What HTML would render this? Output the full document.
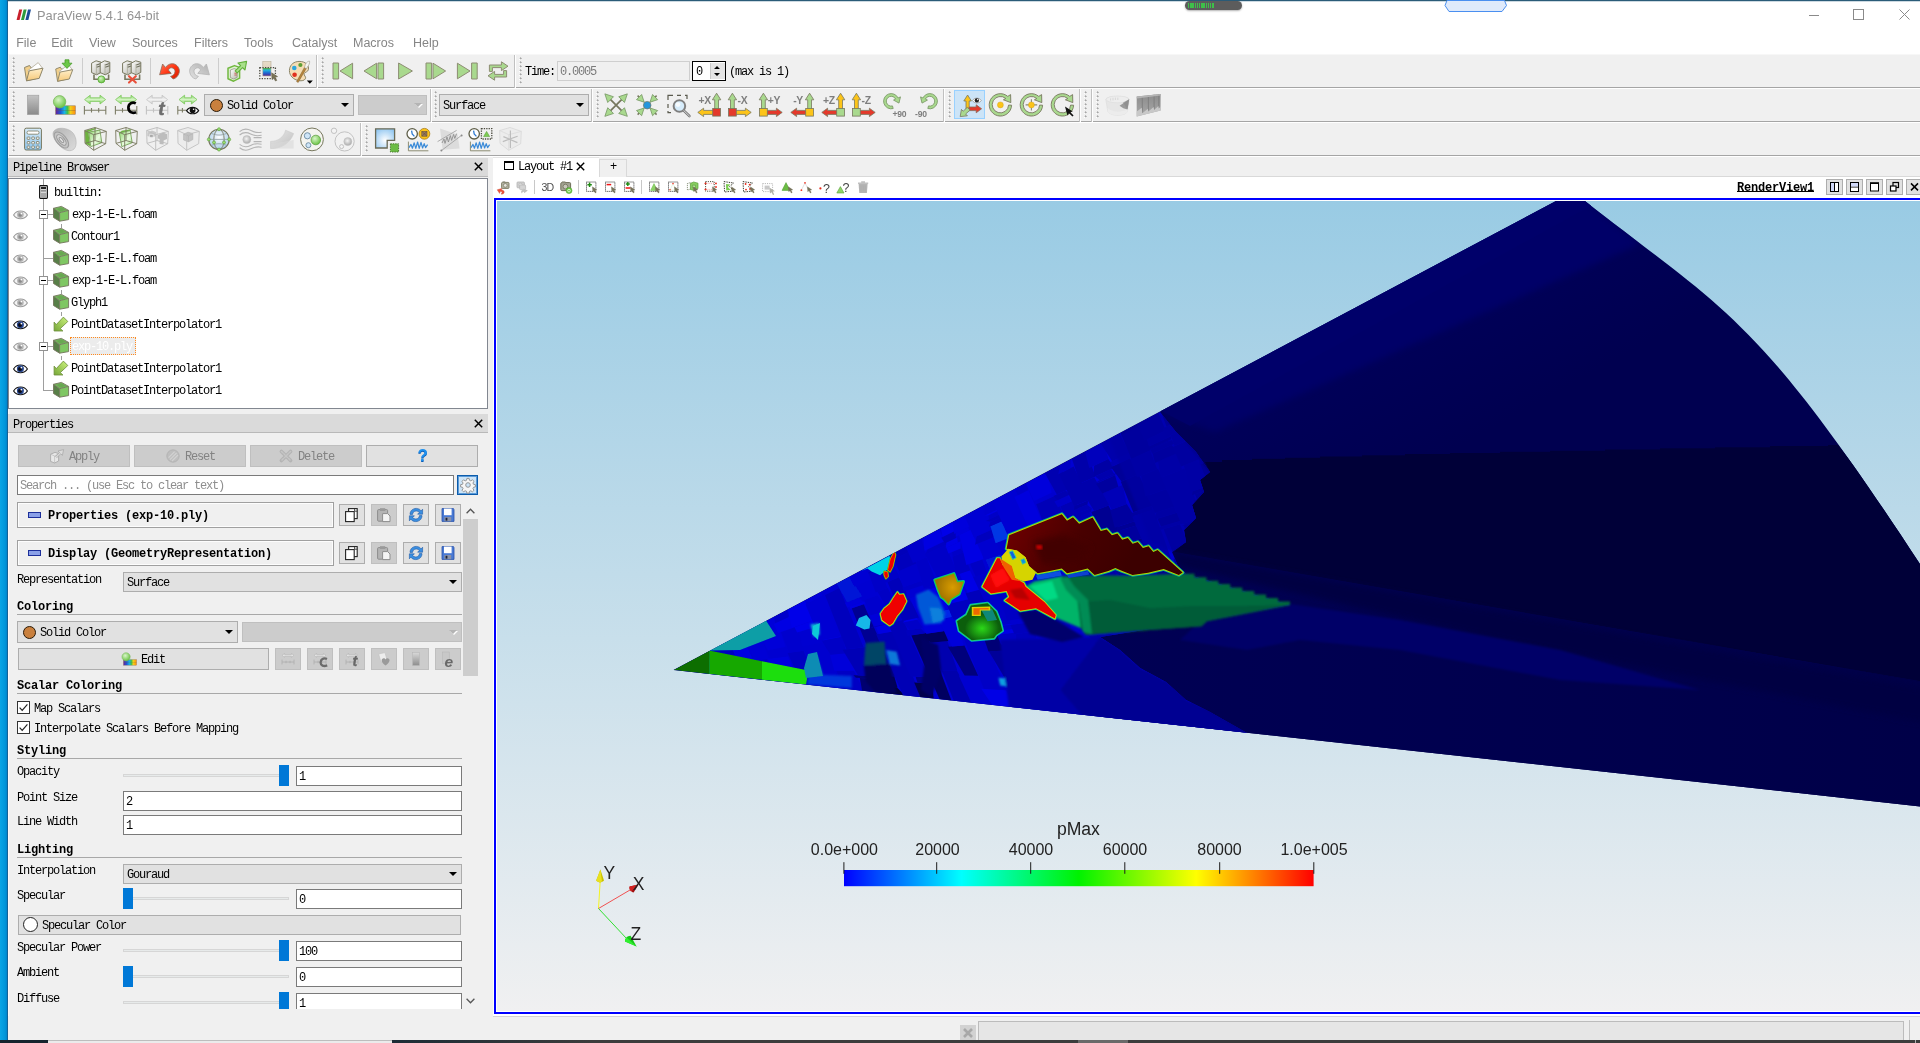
<!DOCTYPE html>
<html><head><meta charset="utf-8"><title>ParaView 5.4.1 64-bit</title>
<style>
html,body{margin:0;padding:0;}
body{width:1920px;height:1043px;overflow:hidden;position:relative;background:#f0f0f0;
 font-family:"Liberation Mono","Noto Sans CJK SC",monospace;font-size:12px;letter-spacing:-1.2px;color:#000;}
.a{position:absolute;}
.t{position:absolute;white-space:pre;line-height:14px;height:14px;margin-top:1px;}
.b{font-weight:bold;}
.ss{font-family:"Liberation Sans","Noto Sans CJK SC",sans-serif;letter-spacing:0;margin-top:0;}
svg{position:absolute;overflow:visible;letter-spacing:0;}
.hl{position:absolute;height:1px;background:#a0a0a0;}
.btn{position:absolute;background:#e1e1e1;border:1px solid #adadad;box-sizing:border-box;}
.btnd{position:absolute;background:#cccccc;border:1px solid #bfbfbf;box-sizing:border-box;}
.inp{position:absolute;background:#fff;border:1px solid #7a7a7a;box-sizing:border-box;}
.grip{position:absolute;width:3px;background-image:radial-gradient(circle at 1.6px 1.4px,#a6a6a6 0.7px,rgba(166,166,166,0) 1.3px),radial-gradient(circle at 1px 2.2px,#ffffff 0.6px,rgba(255,255,255,0) 1.2px);background-size:3px 4px;background-repeat:repeat-y;}
</style></head>
<body>
<div id="root" style="position:absolute;left:0;top:0;width:1920px;height:1043px;overflow:hidden;will-change:transform">
<svg width="0" height="0" style="position:absolute"><defs>
<linearGradient id="gFold" x1="0" y1="0" x2="0" y2="1"><stop offset="0" stop-color="#fff0cc"/><stop offset="1" stop-color="#f6c979"/></linearGradient>
<linearGradient id="gSrv" x1="0" y1="0" x2="1" y2="1"><stop offset="0" stop-color="#ffffff"/><stop offset="1" stop-color="#b9b9ae"/></linearGradient>
<linearGradient id="gSrvD" x1="0" y1="0" x2="1" y2="1"><stop offset="0" stop-color="#9a9a90"/><stop offset="1" stop-color="#d8d8d0"/></linearGradient>
<radialGradient id="gGreenBall" cx="0.4" cy="0.35" r="0.7"><stop offset="0" stop-color="#d8f5c8"/><stop offset="1" stop-color="#62c03a"/></radialGradient>
<radialGradient id="gGreenBall2" cx="0.45" cy="0.4" r="0.6"><stop offset="0" stop-color="#e8ffe0"/><stop offset="0.5" stop-color="#5cb83a"/><stop offset="1" stop-color="#3c8c22"/></radialGradient>
<radialGradient id="gGrayBall" cx="0.45" cy="0.4" r="0.6"><stop offset="0" stop-color="#f4f4f4"/><stop offset="1" stop-color="#a8a8a8"/></radialGradient>
<linearGradient id="gUndo" x1="0" y1="0" x2="1" y2="1"><stop offset="0" stop-color="#ff7a5c"/><stop offset="0.5" stop-color="#ff3210"/><stop offset="1" stop-color="#d42000"/></linearGradient>
<linearGradient id="gRedo" x1="0" y1="0" x2="1" y2="1"><stop offset="0" stop-color="#b0b0b0"/><stop offset="1" stop-color="#e2e2e2"/></linearGradient>
<linearGradient id="gBar" x1="0" y1="0" x2="0" y2="1"><stop offset="0" stop-color="#e8dcc8"/><stop offset="0.42" stop-color="#e0d4c0"/><stop offset="0.45" stop-color="#5ab43c"/><stop offset="0.6" stop-color="#20b4dc"/><stop offset="0.8" stop-color="#2060d0"/><stop offset="1" stop-color="#5a2a8c"/></linearGradient>
<linearGradient id="gRain" x1="0" y1="0" x2="1" y2="0"><stop offset="0" stop-color="#6a1e9a"/><stop offset="0.25" stop-color="#1e5ad2"/><stop offset="0.45" stop-color="#18b4e6"/><stop offset="0.6" stop-color="#3cc050"/><stop offset="0.75" stop-color="#f0d018"/><stop offset="1" stop-color="#ff8a10"/></linearGradient>
<linearGradient id="gGrayBar" x1="0" y1="0" x2="0" y2="1"><stop offset="0" stop-color="#c4c4c4"/><stop offset="1" stop-color="#8a8a8a"/></linearGradient>
<linearGradient id="gGArrow" x1="0" y1="0" x2="0" y2="1"><stop offset="0" stop-color="#8cd870"/><stop offset="0.5" stop-color="#d4f4c4"/><stop offset="1" stop-color="#7ed05c"/></linearGradient>
<linearGradient id="gDArrow" x1="0" y1="0" x2="0" y2="1"><stop offset="0" stop-color="#cfcfcf"/><stop offset="0.5" stop-color="#f2f2f2"/><stop offset="1" stop-color="#cfcfcf"/></linearGradient>
<linearGradient id="gCalc" x1="0" y1="0" x2="0" y2="1"><stop offset="0" stop-color="#d8ecfa"/><stop offset="1" stop-color="#8cc4ec"/></linearGradient>
<radialGradient id="gBlueSq" cx="0.5" cy="0.6" r="0.7"><stop offset="0" stop-color="#ffffff"/><stop offset="1" stop-color="#8cc4f0"/></radialGradient>
<radialGradient id="gGlobe" cx="0.5" cy="0.4" r="0.6"><stop offset="0" stop-color="#ffffff"/><stop offset="1" stop-color="#a8cce8"/></radialGradient>
<linearGradient id="gGreenFace" x1="0" y1="0" x2="1" y2="1"><stop offset="0" stop-color="#8cd46c"/><stop offset="0.6" stop-color="#eafbe0"/><stop offset="1" stop-color="#9cdc80"/></linearGradient>
<linearGradient id="gGrayFace" x1="0" y1="0" x2="1" y2="1"><stop offset="0" stop-color="#e8e8e8"/><stop offset="1" stop-color="#c0c0c0"/></linearGradient>
<linearGradient id="gGrayFace2" x1="0" y1="0" x2="1" y2="1"><stop offset="0" stop-color="#b4b4b4"/><stop offset="1" stop-color="#dcdcdc"/></linearGradient>
<linearGradient id="gArw" x1="1" y1="0" x2="0" y2="1"><stop offset="0" stop-color="#cdf47e"/><stop offset="1" stop-color="#76a638"/></linearGradient>
<linearGradient id="gVol2" x1="0" y1="0" x2="0" y2="1"><stop offset="0" stop-color="#8c8c8c"/><stop offset="1" stop-color="#a8a8a8"/></linearGradient>
<linearGradient id="gCube" x1="0" y1="0" x2="1" y2="1"><stop offset="0" stop-color="#a4dc82"/><stop offset="1" stop-color="#6db648"/></linearGradient>
</defs></svg>
<div class="a" style="left:0px;top:0px;width:8px;height:1043px;background:linear-gradient(90deg,#0aa5e6 0,#0096da 5px,#0079c4 8px);"></div>
<div class="a" style="left:8px;top:0px;width:1912px;height:54px;background:#ffffff;"></div>
<div class="a" style="left:7px;top:0px;width:1913px;height:1px;background:#2b5c78;"></div>
<div class="a" style="left:7px;top:1px;width:1px;height:1042px;background:rgba(40,70,100,.5);"></div>
<div class="a" style="left:8px;top:1px;width:1912px;height:1px;background:#9ab4c4;opacity:.5"></div>
<svg style="left:16px;top:9px" width="16" height="12" viewBox="0 0 16 12"><path d="M3.2,0.5h3l-2.6,10.5h-3z" fill="#c8202c"/><path d="M7.6,0.5h3l-2.6,10.5h-3z" fill="#2e9a3c"/><path d="M12,0.5h3l-2.6,10.5h-3z" fill="#1c4c96"/></svg>
<div class="t ss" style="left:37px;top:9px;font-size:12.8px;color:#939393;line-height:14px">ParaView 5.4.1 64-bit</div>
<svg style="left:1800px;top:4px" width="120" height="22" viewBox="1800 4 120 22" fill="none" stroke="#8a8a8a" stroke-width="1"><path d="M1809,15.5h10"/><rect x="1853.5" y="9.5" width="10" height="10"/><path d="M1899.5,9.5l10,10M1909.5,9.5l-10,10"/></svg>
<div class="a" style="left:1185px;top:1px;width:57px;height:9px;border-radius:5px;background:#5c5c5c;box-shadow:0 1px 2px rgba(0,0,0,.3)"></div>
<div class="a" style="left:1188px;top:3px;width:26px;height:5px;background:repeating-linear-gradient(90deg,#3ec04a 0 1.3px,#5c5c5c 1.3px 2.2px)"></div>
<svg style="left:1444px;top:0" width="64" height="13" viewBox="0 0 64 13"><path d="M3,0.5 L1,5.5 L5,11.5 H58 L62.5,5.5 L60.5,0.5Z" fill="#dfeafb" stroke="#4a8ff0" stroke-width="1"/></svg>
<div class="t ss" style="left:16.2px;top:36px;font-size:12.5px;color:#858585;line-height:14px">File</div>
<div class="t ss" style="left:51.2px;top:36px;font-size:12.5px;color:#858585;line-height:14px">Edit</div>
<div class="t ss" style="left:89px;top:36px;font-size:12.5px;color:#858585;line-height:14px">View</div>
<div class="t ss" style="left:132px;top:36px;font-size:12.5px;color:#858585;line-height:14px">Sources</div>
<div class="t ss" style="left:194px;top:36px;font-size:12.5px;color:#858585;line-height:14px">Filters</div>
<div class="t ss" style="left:244px;top:36px;font-size:12.5px;color:#858585;line-height:14px">Tools</div>
<div class="t ss" style="left:292px;top:36px;font-size:12.5px;color:#858585;line-height:14px">Catalyst</div>
<div class="t ss" style="left:353px;top:36px;font-size:12.5px;color:#858585;line-height:14px">Macros</div>
<div class="t ss" style="left:413px;top:36px;font-size:12.5px;color:#858585;line-height:14px">Help</div>
<div class="a" style="left:8px;top:87px;width:1912px;height:1px;background:#a5a5a5;"></div>
<div class="a" style="left:8px;top:88px;width:1912px;height:1px;background:#ffffff;"></div>
<div class="a" style="left:8px;top:121px;width:1912px;height:1px;background:#a5a5a5;"></div>
<div class="a" style="left:8px;top:122px;width:1912px;height:1px;background:#ffffff;"></div>
<div class="a" style="left:8px;top:155px;width:1912px;height:1px;background:#a5a5a5;"></div>
<div class="a" style="left:8px;top:156px;width:1912px;height:1px;background:#ffffff;"></div>
<div class="a" style="left:8px;top:54px;width:1912px;height:1px;background:#f7f7f7;"></div>
<div class="grip" style="left:12px;top:57px;height:28px"></div>
<svg style="left:20.5px;top:58.5px" width="24" height="24" viewBox="0 0 24 24"><g transform="translate(0,0) scale(1.0)"><path d="M3.5,8.5 L8.5,6.5 L10,8.8 L16.5,7.2 L17.5,19 L5.5,21.8Z" fill="#f2d08c" stroke="#8c8468" stroke-width="1" stroke-linejoin="round"/>
<path d="M7,11.5 L17.2,3.6 L21.2,8.8 L10.5,15.5Z" fill="#ffffff" stroke="#b0aa98" stroke-width=".8" stroke-linejoin="round"/>
<path d="M5.5,21.8 L8.2,11.8 L22,9.2 L18.2,19.4Z" fill="url(#gFold)" stroke="#8c8468" stroke-width="1" stroke-linejoin="round"/></g></svg>
<svg style="left:51.5px;top:58.5px" width="24" height="24" viewBox="0 0 24 24"><g transform="translate(0.5,2.2) scale(0.92)"><path d="M3.5,8.5 L8.5,6.5 L10,8.8 L16.5,7.2 L17.5,19 L5.5,21.8Z" fill="#f2d08c" stroke="#8c8468" stroke-width="1" stroke-linejoin="round"/>
<path d="M7,11.5 L17.2,3.6 L21.2,8.8 L10.5,15.5Z" fill="#ffffff" stroke="#b0aa98" stroke-width=".8" stroke-linejoin="round"/>
<path d="M5.5,21.8 L8.2,11.8 L22,9.2 L18.2,19.4Z" fill="url(#gFold)" stroke="#8c8468" stroke-width="1" stroke-linejoin="round"/></g><path d="M13,0.8h4v3.4h3l-5,5.2l-5,-5.2h3z" fill="#6cc848" stroke="#4a9a2c" stroke-width=".8" stroke-linejoin="round"/></svg>
<div class="a" style="left:82px;top:58px;width:1px;height:26px;background:#cdcdcd;"></div>
<svg style="left:88.5px;top:58.5px" width="24" height="24" viewBox="0 0 24 24"><path d="M2.6,4.2 L7.1,1.8 L12.2,3.2 L12.2,13.4 L7.6,15.8 L2.6,13.6Z" fill="url(#gSrv)" stroke="#77775e" stroke-width="1" stroke-linejoin="round"/><path d="M7.6,6 L11.799999999999999,4.6 M7.6,8.2 L11.799999999999999,6.8" stroke="#6e6e5c" stroke-width="1.1"/><path d="M7.4,5 L7.4,15.4" stroke="#9a9a88" stroke-width=".6"/><path d="M11.2,4.2 L15.7,1.8 L20.799999999999997,3.2 L20.799999999999997,13.4 L16.2,15.8 L11.2,13.6Z" fill="url(#gSrv)" stroke="#77775e" stroke-width="1" stroke-linejoin="round"/><path d="M16.2,6 L20.4,4.6 M16.2,8.2 L20.4,6.8" stroke="#6e6e5c" stroke-width="1.1"/><path d="M16.0,5 L16.0,15.4" stroke="#9a9a88" stroke-width=".6"/><path d="M5,15.5V20.2H19.6V15.5" fill="none" stroke="#77775e" stroke-width="1.6"/><circle cx="12.4" cy="20.4" r="3.5" fill="url(#gGreenBall)" stroke="#5fae3c" stroke-width=".9"/></svg>
<svg style="left:119.5px;top:58.5px" width="24" height="24" viewBox="0 0 24 24"><path d="M2.6,4.2 L7.1,1.8 L12.2,3.2 L12.2,13.4 L7.6,15.8 L2.6,13.6Z" fill="url(#gSrv)" stroke="#77775e" stroke-width="1" stroke-linejoin="round"/><path d="M7.6,6 L11.799999999999999,4.6 M7.6,8.2 L11.799999999999999,6.8" stroke="#6e6e5c" stroke-width="1.1"/><path d="M7.4,5 L7.4,15.4" stroke="#9a9a88" stroke-width=".6"/><path d="M11.2,4.2 L15.7,1.8 L20.799999999999997,3.2 L20.799999999999997,13.4 L16.2,15.8 L11.2,13.6Z" fill="url(#gSrv)" stroke="#77775e" stroke-width="1" stroke-linejoin="round"/><path d="M16.2,6 L20.4,4.6 M16.2,8.2 L20.4,6.8" stroke="#6e6e5c" stroke-width="1.1"/><path d="M16.0,5 L16.0,15.4" stroke="#9a9a88" stroke-width=".6"/><path d="M5,15.5V20.2H19.6V15.5" fill="none" stroke="#77775e" stroke-width="1.6"/><path d="M9,17.2L15.8,23.6M15.8,17.2L9,23.6" stroke="#e8503a" stroke-width="2.1" stroke-linecap="round"/></svg>
<div class="a" style="left:150px;top:58px;width:1px;height:26px;background:#cdcdcd;"></div>
<svg style="left:156.5px;top:58.5px" width="24" height="24" viewBox="0 0 24 24"><path d="M2.6,15.8 L5.6,5 L8.4,8.4 C10.8,5.4 14.6,3.8 17.8,5.2 C21.2,6.8 23,10.4 22.2,13.6 C21.4,16.8 19,19.4 16.2,20 L13.6,17.4 C16,16.8 17.8,15 18,12.8 C18.2,10.6 16.6,9 14.8,8.8 C13.2,8.6 12,9.6 11.4,11 L14.2,14.4Z" fill="url(#gUndo)" stroke="#8a6a58" stroke-width=".8" stroke-linejoin="round"/></svg>
<svg style="left:187.5px;top:58.5px" width="24" height="24" viewBox="0 0 24 24"><g transform="translate(24,0) scale(-1,1)"><path d="M2.6,15.8 L5.6,5 L8.4,8.4 C10.8,5.4 14.6,3.8 17.8,5.2 C21.2,6.8 23,10.4 22.2,13.6 C21.4,16.8 19,19.4 16.2,20 L13.6,17.4 C16,16.8 17.8,15 18,12.8 C18.2,10.6 16.6,9 14.8,8.8 C13.2,8.6 12,9.6 11.4,11 L14.2,14.4Z" fill="url(#gRedo)" stroke="#b4b4b4" stroke-width=".8" stroke-linejoin="round"/></g></svg>
<div class="a" style="left:218px;top:58px;width:1px;height:26px;background:#cdcdcd;"></div>
<svg style="left:224.5px;top:58.5px" width="24" height="24" viewBox="0 0 24 24"><path d="M3,9.2 L9.5,6.6 L14.6,8.4 L14.6,19.2 L8.6,22.2 L3,19.8Z" fill="#dff3d2" stroke="#72b840" stroke-width="1.5" stroke-linejoin="round"/>
<path d="M5.4,11 L9.2,9.6 L12.2,10.6 L12.2,18.4 L8.8,20 L5.4,18.6Z" fill="url(#gSrv)" stroke="#8a8a7a" stroke-width=".7"/>
<path d="M9.4,14.2h2.4M9.4,16h2.4" stroke="#c04a3a" stroke-width=".8"/>
<path d="M10.2,11.8 L15.6,6.6 L13,4 L21.6,2.4 L20,11 L17.6,8.6 L12.2,13.8Z" fill="#a8e08a" stroke="#62b03a" stroke-width="1.1" stroke-linejoin="round"/></svg>
<svg style="left:255.5px;top:58.5px" width="24" height="24" viewBox="0 0 24 24"><rect x="6.8" y="2.6" width="8.2" height="14.4" fill="url(#gBar)" stroke="#b8ae98" stroke-width=".6"/>
<rect x="3.8" y="8.6" width="15.6" height="11" fill="none" stroke="#4a4a40" stroke-width="1.3" stroke-dasharray="1.3,1.3"/>
<path d="M15.6,13.8 L21.6,17.6 L19.2,18.2 L20.8,21.4 L19.4,22 L17.8,18.9 L16,20.6Z" fill="#7a7458" stroke="#5e5a44" stroke-width=".5"/></svg>
<svg style="left:286.5px;top:58.5px" width="24" height="24" viewBox="0 0 24 24"><path d="M12,2.4 C18.5,2.2 22.4,6.4 21.4,10.6 C20.8,13.2 18,12.8 17.2,14.6 C16.4,16.6 19.6,17.4 18.4,19.8 C17.4,21.8 13.6,22.4 10,21.2 C4.6,19.4 1.6,14.8 2.6,9.8 C3.4,5.4 7,2.6 12,2.4Z" fill="#f5ddb4" stroke="#8a8468" stroke-width="1"/>
<circle cx="7.3" cy="9" r="2.3" fill="#2ea6de"/><circle cx="13.4" cy="6" r="2.1" fill="#5e9e34"/><circle cx="7.6" cy="15.8" r="2.3" fill="#e0301e"/>
<path d="M9.6,22.6 L17.6,8.2 L19.4,9.2 L11.2,23.4Z" fill="#b8863c" stroke="#7a5a28" stroke-width=".5"/>
<path d="M17.4,8.6 L18.4,5.4 C19.2,3.4 21.2,2 22.6,2.2 C22.8,4 22,6.4 20.4,7.8 L19.6,9.8Z" fill="#f4f4f0" stroke="#9a9a8a" stroke-width=".6"/>
<path d="M19.8,21.6h6l-3,3.2z" fill="#000"/></svg>
<div class="a" style="left:316px;top:55px;width:1px;height:33px;background:#c0c0c0;"></div><div class="a" style="left:317px;top:55px;width:1px;height:33px;background:#ffffff;"></div>
<div class="grip" style="left:321px;top:57px;height:28px"></div>
<svg style="left:330.5px;top:58.5px" width="24" height="24" viewBox="0 0 24 24"><path d="M2,4h5.6v16H2z" fill="#a9d98e" stroke="#8c8c72" stroke-width="1" stroke-linejoin="miter"/><path d="M21.6,4.2L9,12L21.6,19.8z" fill="#a9d98e" stroke="#8c8c72" stroke-width="1" stroke-linejoin="miter"/></svg>
<svg style="left:361.5px;top:58.5px" width="24" height="24" viewBox="0 0 24 24"><path d="M16,4h5.6v16H16z" fill="#a9d98e" stroke="#8c8c72" stroke-width="1" stroke-linejoin="miter"/><path d="M14.6,4.2L2,12L14.6,19.8z" fill="#a9d98e" stroke="#8c8c72" stroke-width="1" stroke-linejoin="miter"/></svg>
<svg style="left:392.5px;top:58.5px" width="24" height="24" viewBox="0 0 24 24"><path d="M5.6,4L19.4,12L5.6,20z" fill="#a9d98e" stroke="#8c8c72" stroke-width="1" stroke-linejoin="miter"/></svg>
<svg style="left:423.5px;top:58.5px" width="24" height="24" viewBox="0 0 24 24"><path d="M2,4h5.6v16H2z" fill="#a9d98e" stroke="#8c8c72" stroke-width="1" stroke-linejoin="miter"/><path d="M9,4.2L21.6,12L9,19.8z" fill="#a9d98e" stroke="#8c8c72" stroke-width="1" stroke-linejoin="miter"/></svg>
<svg style="left:454.5px;top:58.5px" width="24" height="24" viewBox="0 0 24 24"><path d="M16.6,4h5.6v16h-5.6z" fill="#a9d98e" stroke="#8c8c72" stroke-width="1" stroke-linejoin="miter"/><path d="M2.4,4.2L15,12L2.4,19.8z" fill="#a9d98e" stroke="#8c8c72" stroke-width="1" stroke-linejoin="miter"/></svg>
<svg style="left:485.5px;top:58.5px" width="24" height="24" viewBox="0 0 24 24"><path d="M3.4,12.4V6H15.4V2.8L22,7.2L15.4,11.6V8.6H6.4V12.4Z M20.6,11.6V18H8.6V21.2L2,16.8L8.6,12.4V15.4H17.6V11.6Z" fill="#a9d98e" stroke="#8c8c72" stroke-width="1" stroke-linejoin="miter"/></svg>
<div class="a" style="left:514px;top:55px;width:1px;height:33px;background:#c0c0c0;"></div><div class="a" style="left:515px;top:55px;width:1px;height:33px;background:#ffffff;"></div>
<div class="grip" style="left:519px;top:57px;height:28px"></div>
<div class="t " style="left:525px;top:64px;">Time:</div>
<div class="inp" style="left:557px;top:61px;width:133px;height:20px;border-color:#cfcfcf;background:#f0f0f0"></div>
<div class="t " style="left:560px;top:64px;color:#7a7a7a">0.0005</div>
<div class="inp" style="left:692px;top:61px;width:34px;height:20px;border-color:#000"></div>
<div class="t " style="left:696px;top:64px;">0</div>
<div class="a" style="left:710px;top:63px;width:14px;height:16px;background:#e4e4e4;border-left:1px solid #c8c8c8"></div>
<svg style="left:713px;top:65px" width="8" height="12" viewBox="0 0 8 12"><path d="M1,4L4,1L7,4Z M1,8L4,11L7,8Z" fill="#000"/></svg>
<div class="t " style="left:729px;top:64px;">(max is 1)</div>
<div class="grip" style="left:12px;top:91px;height:28px"></div>
<svg style="left:20.5px;top:92.5px" width="24" height="24" viewBox="0 0 24 24"><rect x="6.4" y="2.2" width="11.4" height="19.4" fill="url(#gGrayBar)" stroke="#9c9c9c" stroke-width=".6"/></svg>
<svg style="left:51.5px;top:92.5px" width="24" height="24" viewBox="0 0 24 24"><rect x="3.6" y="12.8" width="19.8" height="8.6" fill="url(#gRain)" stroke="#8a7a5a" stroke-width=".5"/><path d="M3.6,17.6h19.8" stroke="#6a5a4a" stroke-width=".5" opacity=".7"/><circle cx="7.6" cy="8.8" r="6.2" fill="url(#gGreenBall)" stroke="#7ab85c" stroke-width=".8"/></svg>
<svg style="left:82.5px;top:92.5px" width="24" height="24" viewBox="0 0 24 24"><path d="M1.6,6.6 L7.199999999999999,2.2 V4.8 H17.0 V2.2 L22.6,6.6 L17.0,11 V8.4 H7.199999999999999 V11Z" fill="url(#gGArrow)" stroke="#7cc85c" stroke-width=".8" stroke-linejoin="round"/><path d="M1.4,17.2H22.8M1.4,13.0V21.4M8.5,15.0V19.4M15.7,15.0V19.4M22.8,13.0V21.4" stroke="#7c7c66" stroke-width="1.1" fill="none"/></svg>
<svg style="left:113.5px;top:92.5px" width="24" height="24" viewBox="0 0 24 24"><path d="M1.6,6.6 L7.199999999999999,2.2 V4.8 H17.0 V2.2 L22.6,6.6 L17.0,11 V8.4 H7.199999999999999 V11Z" fill="url(#gGArrow)" stroke="#7cc85c" stroke-width=".8" stroke-linejoin="round"/><path d="M1.4,17.2H22.8M1.4,13.0V21.4M8.5,15.0V19.4M15.7,15.0V19.4M22.8,13.0V21.4" stroke="#7c7c66" stroke-width="1.1" fill="none"/><path d="M21.8,10.4 C18,8.4 14.4,10.8 14.4,14.8 C14.4,19 18,20.8 22,19.2" fill="none" stroke="#000" stroke-width="2.7"/></svg>
<svg style="left:144.5px;top:92.5px" width="24" height="24" viewBox="0 0 24 24"><path d="M1.6,6.6 L7.199999999999999,2.2 V4.8 H17.0 V2.2 L22.6,6.6 L17.0,11 V8.4 H7.199999999999999 V11Z" fill="url(#gDArrow)" stroke="#c4c4c4" stroke-width=".8" stroke-linejoin="round"/><path d="M1.4,17.2H22.8M1.4,13.0V21.4M8.5,15.0V19.4M15.7,15.0V19.4M22.8,13.0V21.4" stroke="#c2c2c2" stroke-width="1.1" fill="none"/><text x="13.2" y="21.6" font-family="Liberation Sans,sans-serif" font-style="italic" font-weight="bold" font-size="19" fill="#6e6e6e" stroke="#6e6e6e" stroke-width=".5">t</text></svg>
<svg style="left:175.5px;top:92.5px" width="24" height="24" viewBox="0 0 24 24"><path d="M3,6.6 L8.6,2.2 V4.8 H15.4 V2.2 L21,6.6 L15.4,11 V8.4 H8.6 V11Z" fill="url(#gGArrow)" stroke="#7cc85c" stroke-width=".8" stroke-linejoin="round"/><path d="M1.6,17.2H10M1.8,13V21.4M6.4,15V19.4" stroke="#7c7c66" stroke-width="1.1"/><g transform="translate(10.6,17.6)"><path d="M0,0 C2.6,-4.4 9.4,-4.4 12,0 C9.4,4.2 2.6,4.2 0,0Z" fill="#fff" stroke="#111" stroke-width="1.2"/><circle cx="6" cy="-.4" r="2.9" fill="#111"/><circle cx="7" cy="-1.4" r=".8" fill="#fff"/></g></svg>
<div class="a" style="left:204px;top:94px;width:150px;height:22px;box-sizing:border-box;background:#e1e1e1;border:1px solid #adadad"></div>
<svg style="left:341px;top:103px" width="8" height="4" viewBox="0 0 8 4"><path d="M0,0H8L4,4Z" fill="#000"/></svg>
<div class="a" style="left:210px;top:99px;width:11px;height:11px;border-radius:50%;background:#c9803e;border:1px solid #2a1a08"></div>
<div class="t " style="left:227px;top:98px;">Solid Color</div>
<div class="a" style="left:358px;top:95px;width:69px;height:20px;box-sizing:border-box;background:#cccccc;border:1px solid #bfbfbf"></div>
<svg style="left:414px;top:103px" width="9" height="6" viewBox="0 0 9 6"><path d="M1,1H9L5,5Z" fill="#fff"/><path d="M0,0H8L4,4Z" fill="#b4b4b4"/></svg>
<div class="a" style="left:430px;top:89px;width:1px;height:33px;background:#c0c0c0;"></div><div class="a" style="left:431px;top:89px;width:1px;height:33px;background:#ffffff;"></div>
<div class="grip" style="left:434px;top:91px;height:28px"></div>
<div class="a" style="left:439px;top:94px;width:150px;height:22px;box-sizing:border-box;background:#e1e1e1;border:1px solid #adadad"></div>
<svg style="left:576px;top:103px" width="8" height="4" viewBox="0 0 8 4"><path d="M0,0H8L4,4Z" fill="#000"/></svg>
<div class="t " style="left:443px;top:98px;">Surface</div>
<div class="a" style="left:591px;top:89px;width:1px;height:33px;background:#c0c0c0;"></div><div class="a" style="left:592px;top:89px;width:1px;height:33px;background:#ffffff;"></div>
<div class="grip" style="left:596px;top:91px;height:28px"></div>
<svg style="left:604px;top:92.5px" width="24" height="24" viewBox="0 0 24 24"><path d="M4.6,4.6L19.6,19.6M19.6,4.6L4.6,19.6" stroke="#77775e" stroke-width="1.7"/><g transform="translate(4,4) rotate(-45)"><path d="M0,-4.44 L4.07,3.7 L-4.07,3.7Z" fill="#a9d98e" stroke="#7a9a68" stroke-width=".8" stroke-linejoin="round"/></g><g transform="translate(20.2,4) rotate(45)"><path d="M0,-4.44 L4.07,3.7 L-4.07,3.7Z" fill="#a9d98e" stroke="#7a9a68" stroke-width=".8" stroke-linejoin="round"/></g><g transform="translate(4,20.2) rotate(-135)"><path d="M0,-4.44 L4.07,3.7 L-4.07,3.7Z" fill="#a9d98e" stroke="#7a9a68" stroke-width=".8" stroke-linejoin="round"/></g><g transform="translate(20.2,20.2) rotate(135)"><path d="M0,-4.44 L4.07,3.7 L-4.07,3.7Z" fill="#a9d98e" stroke="#7a9a68" stroke-width=".8" stroke-linejoin="round"/></g></svg>
<svg style="left:635px;top:92.5px" width="24" height="24" viewBox="0 0 24 24"><path d="M2.6,2.6L7.6,7.6M21.6,2.6L16.6,7.6M2.6,21.6L7.6,16.6M21.6,21.6L16.6,16.6" stroke="#77775e" stroke-width="1.5"/><g transform="translate(6.4,6.4) rotate(135)"><path d="M0,-3.9599999999999995 L3.63,3.3 L-3.63,3.3Z" fill="#a9d98e" stroke="#7a9a68" stroke-width=".8" stroke-linejoin="round"/></g><g transform="translate(17.8,6.4) rotate(-135)"><path d="M0,-3.9599999999999995 L3.63,3.3 L-3.63,3.3Z" fill="#a9d98e" stroke="#7a9a68" stroke-width=".8" stroke-linejoin="round"/></g><g transform="translate(6.4,17.8) rotate(45)"><path d="M0,-3.9599999999999995 L3.63,3.3 L-3.63,3.3Z" fill="#a9d98e" stroke="#7a9a68" stroke-width=".8" stroke-linejoin="round"/></g><g transform="translate(17.8,17.8) rotate(-45)"><path d="M0,-3.9599999999999995 L3.63,3.3 L-3.63,3.3Z" fill="#a9d98e" stroke="#7a9a68" stroke-width=".8" stroke-linejoin="round"/></g><circle cx="12.2" cy="12.2" r="3.8" fill="#2496dc" stroke="#77775e" stroke-width=".7"/></svg>
<svg style="left:666px;top:92.5px" width="24" height="24" viewBox="0 0 24 24"><path d="M2,7V2.4H7M11,2.4H15M19,2.4H21V6M2,11V15M2,18V19.6H5" fill="none" stroke="#5a5a4e" stroke-width="1.2"/><circle cx="13.4" cy="13" r="5.8" fill="#d6ecfb" stroke="#8c8c8c" stroke-width="2"/><circle cx="13.4" cy="13" r="5.8" fill="none" stroke="#6e6e6e" stroke-width=".6"/><circle cx="12" cy="11.6" r="2.4" fill="#fff" opacity=".8"/><path d="M17.8,17.6L23.4,23" stroke="#7a7a7a" stroke-width="2.6" stroke-linecap="round"/><path d="M17.8,17.6L23.4,23" stroke="#dcdcdc" stroke-width="1" stroke-linecap="round"/></svg>
<svg style="left:697px;top:92.5px" width="24" height="24" viewBox="0 0 24 24"><path d="M17.700000000000003,17 V6.8 H15.400000000000002 L19.6,0.2 L23.8,6.8 H21.5 V17Z" fill="#a9d98e" stroke="#77775e" stroke-width=".8" stroke-linejoin="round"/><path d="M16.6,17.4 H6.6 V15.2 L0.8,19.4 L6.6,23.6 V21.4 H16.6Z" fill="#fcc419" stroke="#77775e" stroke-width=".8" stroke-linejoin="round"/><rect x="15.700000000000001" y="15.5" width="7.8" height="7.6" fill="#e4392b" stroke="#77775e" stroke-width=".8"/><text x="1.6" y="10.6" font-family="Liberation Sans,sans-serif" font-weight="bold" font-size="10.4" fill="#7e7e7e" letter-spacing="-.4">+X</text></svg>
<svg style="left:728px;top:92.5px" width="24" height="24" viewBox="0 0 24 24"><path d="M2.5000000000000004,17 V6.8 H0.20000000000000018 L4.4,0.2 L8.600000000000001,6.8 H6.300000000000001 V17Z" fill="#a9d98e" stroke="#77775e" stroke-width=".8" stroke-linejoin="round"/><path d="M7.4,17.4 H17.4 V15.2 L23.2,19.4 L17.4,23.6 V21.4 H7.4Z" fill="#fcc419" stroke="#77775e" stroke-width=".8" stroke-linejoin="round"/><rect x="0.5000000000000004" y="15.5" width="7.8" height="7.6" fill="#e4392b" stroke="#77775e" stroke-width=".8"/><text x="9.6" y="10.6" font-family="Liberation Sans,sans-serif" font-weight="bold" font-size="10.4" fill="#7e7e7e" letter-spacing="-.4">-X</text></svg>
<svg style="left:759px;top:92.5px" width="24" height="24" viewBox="0 0 24 24"><path d="M2.5000000000000004,17 V6.8 H0.20000000000000018 L4.4,0.2 L8.600000000000001,6.8 H6.300000000000001 V17Z" fill="#a9d98e" stroke="#77775e" stroke-width=".8" stroke-linejoin="round"/><path d="M7.4,17.4 H17.4 V15.2 L23.2,19.4 L17.4,23.6 V21.4 H7.4Z" fill="#e4392b" stroke="#77775e" stroke-width=".8" stroke-linejoin="round"/><rect x="0.5000000000000004" y="15.5" width="7.8" height="7.6" fill="#fcc419" stroke="#77775e" stroke-width=".8"/><text x="8.8" y="10.6" font-family="Liberation Sans,sans-serif" font-weight="bold" font-size="10.4" fill="#7e7e7e" letter-spacing="-.4">+Y</text></svg>
<svg style="left:790px;top:92.5px" width="24" height="24" viewBox="0 0 24 24"><path d="M17.700000000000003,17 V6.8 H15.400000000000002 L19.6,0.2 L23.8,6.8 H21.5 V17Z" fill="#a9d98e" stroke="#77775e" stroke-width=".8" stroke-linejoin="round"/><path d="M16.6,17.4 H6.6 V15.2 L0.8,19.4 L6.6,23.6 V21.4 H16.6Z" fill="#e4392b" stroke="#77775e" stroke-width=".8" stroke-linejoin="round"/><rect x="15.700000000000001" y="15.5" width="7.8" height="7.6" fill="#fcc419" stroke="#77775e" stroke-width=".8"/><text x="3.2" y="10.6" font-family="Liberation Sans,sans-serif" font-weight="bold" font-size="10.4" fill="#7e7e7e" letter-spacing="-.4">-Y</text></svg>
<svg style="left:821px;top:92.5px" width="24" height="24" viewBox="0 0 24 24"><path d="M17.700000000000003,17 V6.8 H15.400000000000002 L19.6,0.2 L23.8,6.8 H21.5 V17Z" fill="#fcc419" stroke="#77775e" stroke-width=".8" stroke-linejoin="round"/><path d="M16.6,17.4 H6.6 V15.2 L0.8,19.4 L6.6,23.6 V21.4 H16.6Z" fill="#e4392b" stroke="#77775e" stroke-width=".8" stroke-linejoin="round"/><rect x="15.700000000000001" y="15.5" width="7.8" height="7.6" fill="#a9d98e" stroke="#77775e" stroke-width=".8"/><text x="2" y="10.6" font-family="Liberation Sans,sans-serif" font-weight="bold" font-size="10.4" fill="#7e7e7e" letter-spacing="-.4">+Z</text></svg>
<svg style="left:852px;top:92.5px" width="24" height="24" viewBox="0 0 24 24"><path d="M2.5000000000000004,17 V6.8 H0.20000000000000018 L4.4,0.2 L8.600000000000001,6.8 H6.300000000000001 V17Z" fill="#fcc419" stroke="#77775e" stroke-width=".8" stroke-linejoin="round"/><path d="M7.4,17.4 H17.4 V15.2 L23.2,19.4 L17.4,23.6 V21.4 H7.4Z" fill="#e4392b" stroke="#77775e" stroke-width=".8" stroke-linejoin="round"/><rect x="0.5000000000000004" y="15.5" width="7.8" height="7.6" fill="#a9d98e" stroke="#77775e" stroke-width=".8"/><text x="9.6" y="10.6" font-family="Liberation Sans,sans-serif" font-weight="bold" font-size="10.4" fill="#7e7e7e" letter-spacing="-.4">-Z</text></svg>
<svg style="left:883px;top:92.5px" width="24" height="24" viewBox="0 0 24 24"><path d="M10.17,15.54 A7.6,7.6 0 1 1 15.09,4.99 L17.44,3.89 L15.98,10.09 L10.56,7.1 L12.64,6.13 A4.9,4.9 0 1 0 9.47,12.93Z" fill="#a9d98e" stroke="#7c9a68" stroke-width=".9" stroke-linejoin="round"/><text x="9.4" y="23.6" font-family="Liberation Sans,sans-serif" font-weight="bold" font-size="8.6" fill="#7e7e7e" letter-spacing="-.2">+90</text></svg>
<svg style="left:914px;top:92.5px" width="24" height="24" viewBox="0 0 24 24"><g transform="translate(24,0) scale(-1,1)"><path d="M10.17,15.54 A7.6,7.6 0 1 1 15.09,4.99 L17.44,3.89 L15.98,10.09 L10.56,7.1 L12.64,6.13 A4.9,4.9 0 1 0 9.47,12.93Z" fill="#a9d98e" stroke="#7c9a68" stroke-width=".9" stroke-linejoin="round"/></g><text x="1" y="23.6" font-family="Liberation Sans,sans-serif" font-weight="bold" font-size="8.6" fill="#7e7e7e" letter-spacing="-.2">-90</text></svg>
<div class="a" style="left:943px;top:89px;width:1px;height:33px;background:#c0c0c0;"></div><div class="a" style="left:944px;top:89px;width:1px;height:33px;background:#ffffff;"></div>
<div class="grip" style="left:948px;top:91px;height:28px"></div>
<div class="a" style="left:954px;top:90px;width:31px;height:29px;box-sizing:border-box;background:#cce4f7;border:1px solid #99d1ff"></div>
<svg style="left:957.5px;top:92.5px" width="24" height="24" viewBox="0 0 24 24"><path d="M8,16.6 V8 H5.8 L9.6,2 L13.4,8 H11.2 V16.6Z" fill="#fcc419" stroke="#77775e" stroke-width=".8" stroke-linejoin="round"/>
<path d="M11,14 H18.2 V11.8 L23.6,15.8 L18.2,19.8 V17.6 H11Z" fill="#e4392b" stroke="#8a6a5a" stroke-width=".8" stroke-linejoin="round"/>
<path d="M9.2,14.4 L12.2,17 L7.6,21 L9.4,22.8 L2.2,23.6 L3.4,16.4 L5.2,18.2Z" fill="#a9d98e" stroke="#77775e" stroke-width=".8" stroke-linejoin="round"/>
<g transform="translate(14.4,7.6) scale(.74)"><path d="M0,0 C2.6,-4.4 9.4,-4.4 12,0 C9.4,4.2 2.6,4.2 0,0Z" fill="#fff" stroke="#9a9a9a" stroke-width="1.2"/><circle cx="6" cy="-.2" r="2.9" fill="#222"/><circle cx="7" cy="-1.4" r=".9" fill="#fff"/></g></svg>
<svg style="left:988.5px;top:92.5px" width="24" height="24" viewBox="0 0 24 24"><path d="M22.6,12.2 A11.2,11.2 0 1 1 18.75,3.4 L21.6,1.6 L21.8,9.6 L14.4,6.8 L16.8,5.5 A8.2,8.2 0 1 0 19.6,12.1Z" fill="#a9d98e" stroke="#77775e" stroke-width=".9" stroke-linejoin="round"/><circle cx="11.4" cy="11.9" r="3" fill="#fcc419" stroke="#c8a020" stroke-width=".4"/></svg>
<svg style="left:1019.5px;top:92.5px" width="24" height="24" viewBox="0 0 24 24"><path d="M22.6,12.2 A11.2,11.2 0 1 1 18.75,3.4 L21.6,1.6 L21.8,9.6 L14.4,6.8 L16.8,5.5 A8.2,8.2 0 1 0 19.6,12.1Z" fill="#a9d98e" stroke="#77775e" stroke-width=".9" stroke-linejoin="round"/><path d="M11.4,6.2V17.6M5.6,11.9H17.2" stroke="#8a8a76" stroke-width="1.1"/><circle cx="11.4" cy="11.9" r="3" fill="#fcc419" stroke="#c8a020" stroke-width=".4"/></svg>
<svg style="left:1050.5px;top:92.5px" width="24" height="24" viewBox="0 0 24 24"><path d="M22.6,12.2 A11.2,11.2 0 1 1 18.75,3.4 L21.6,1.6 L21.8,9.6 L14.4,6.8 L16.8,5.5 A8.2,8.2 0 1 0 19.6,12.1Z" fill="#a9d98e" stroke="#77775e" stroke-width=".9" stroke-linejoin="round"/><path d="M14,13.6 L21.8,18.4 L19.2,19 L22.6,22.6 L21.4,23.6 L18,20.2 L16.4,22.4Z" fill="#111"/></svg>
<div class="a" style="left:1079px;top:89px;width:1px;height:33px;background:#c0c0c0;"></div><div class="a" style="left:1080px;top:89px;width:1px;height:33px;background:#ffffff;"></div>
<div class="grip" style="left:1084px;top:91px;height:28px"></div>
<div class="a" style="left:1091px;top:89px;width:1px;height:33px;background:#c0c0c0;"></div><div class="a" style="left:1092px;top:89px;width:1px;height:33px;background:#ffffff;"></div>
<div class="grip" style="left:1096px;top:91px;height:28px"></div>
<svg style="left:1104.5px;top:92.5px" width="24" height="24" viewBox="0 0 24 24"><path d="M0.8,6.4 C0.8,2.4 24.2,2.4 24.2,6.4 L22.4,18.4 C21.4,23.4 4.6,23.6 2.8,18.4Z" fill="#e6e6e6" stroke="#dadada" stroke-width=".6"/><ellipse cx="12.5" cy="6.4" rx="11.4" ry="3.4" fill="#ededed" stroke="#d8d8d8" stroke-width=".5"/><path d="M5.6,5.4v2.2M8,4.8v2.6M10.4,4.6v2.4M12.8,4.6v2.4" stroke="#d2d2d2" stroke-width=".8"/><path d="M14.6,12.8 L24.2,6.2 L22.5,16.6 L18.3,15.2Z" fill="#9a9a9a"/><path d="M18,9.6 L24.2,6.2 L22.5,16.6Z" fill="#8a8a8a" opacity=".6"/><path d="M2.6,15 C8,19.4 15,19.8 22.6,16.6 L22.4,18.4 C21.4,23.4 4.6,23.6 2.8,18.4Z" fill="#ececec"/></svg>
<svg style="left:1135.5px;top:92.5px" width="24" height="24" viewBox="0 0 24 24"><path d="M0.7,3.5 L24.6,1.1 V17.5 L0.7,23.6Z" fill="url(#gVol2)"/><path d="M6.3,3 V20 M12.4,2.4 V19 M18.1,1.8 V17.4 M22.8,1.3 V16.2" stroke="#7e7e7e" stroke-width="1.2" opacity=".8"/><path d="M0.7,3.5 L24.6,1.1 V2.6 L0.7,5.4Z" fill="#b4b4b4"/><path d="M0.7,18.6 L5.8,14.8 L6.3,20.2 L11.9,15.8 L12.4,18.6 L17.6,14 L18.1,17 L22.4,13 L22.8,15.6 L24.6,13.8 V17.5 L0.7,23.6Z" fill="#c8c8c8"/></svg>
<div class="grip" style="left:12px;top:125px;height:28px"></div>
<svg style="left:20.5px;top:126.5px" width="24" height="24" viewBox="0 0 24 24"><rect x="3.6" y="1.2" width="16.8" height="21.8" rx="1.6" fill="url(#gCalc)" stroke="#77775e" stroke-width="1"/><rect x="6" y="4" width="12" height="3.2" rx="1.4" fill="#fff" stroke="#77775e" stroke-width=".8"/><rect x="6.2" y="10.0" width="2.6" height="2.4" rx=".5" fill="#f4f8fb" stroke="#77775e" stroke-width=".8"/><rect x="10.8" y="10.0" width="2.6" height="2.4" rx=".5" fill="#f4f8fb" stroke="#77775e" stroke-width=".8"/><rect x="15.399999999999999" y="10.0" width="2.6" height="2.4" rx=".5" fill="#f4f8fb" stroke="#77775e" stroke-width=".8"/><rect x="6.2" y="14.5" width="2.6" height="2.4" rx=".5" fill="#f4f8fb" stroke="#77775e" stroke-width=".8"/><rect x="10.8" y="14.5" width="2.6" height="2.4" rx=".5" fill="#f4f8fb" stroke="#77775e" stroke-width=".8"/><rect x="15.399999999999999" y="14.5" width="2.6" height="2.4" rx=".5" fill="#f4f8fb" stroke="#77775e" stroke-width=".8"/><rect x="6.2" y="19.0" width="2.6" height="2.4" rx=".5" fill="#f4f8fb" stroke="#77775e" stroke-width=".8"/><rect x="10.8" y="19.0" width="2.6" height="2.4" rx=".5" fill="#f4f8fb" stroke="#77775e" stroke-width=".8"/><rect x="15.399999999999999" y="19.0" width="2.6" height="2.4" rx=".5" fill="#f4f8fb" stroke="#77775e" stroke-width=".8"/></svg>
<svg style="left:51.5px;top:126.5px" width="24" height="24" viewBox="0 0 24 24"><path d="M1,6.6 C1,1 12,-1 19.4,4.4 C24.6,8.6 25.6,18.4 22,22 C18.6,25 13.6,23.8 9,20 C3.6,15.4 1,10 1,6.6Z" fill="url(#gGrayFace2)" stroke="#b0b0b0" stroke-width=".6"/><ellipse cx="9.4" cy="13" rx="5" ry="9.6" transform="rotate(-40 9.4 13)" fill="#c4c4c4" stroke="#9e9e9e" stroke-width="1.1"/><ellipse cx="9.4" cy="13" rx="3" ry="6.4" transform="rotate(-40 9.4 13)" fill="#d4d4d4" stroke="#9a9a9a" stroke-width="1.1"/><ellipse cx="9.4" cy="13" rx="1.3" ry="3.2" transform="rotate(-40 9.4 13)" fill="#e4e4e4" stroke="#9a9a9a" stroke-width="1"/></svg>
<svg style="left:82.5px;top:126.5px" width="24" height="24" viewBox="0 0 24 24"><path d="M2,3.8 L12.4,0.9 L13.4,2 L5.3,4.8 L7.2,19.3 L2.3,16.4Z" fill="#6db33f"/><path d="M5.6,5.1 L16.9,3.1 L18.8,15.7 L7.8,19.6Z" fill="url(#gGreenFace)" stroke="#6a9a4a" stroke-width=".8"/><path d="M1.7,3.5 L12,0.5 L23.3,4.4 L22.7,16.7 L10.7,23.3 L2,16.4Z M1.7,3.5 L10.7,7.7 L23.3,4.4 M10.7,7.7V23.3 M12,0.5V13.5 M2,16.4L12,13.5L22.7,16.7" fill="none" stroke="#77775e" stroke-width=".9" stroke-linejoin="round"/></svg>
<svg style="left:113.5px;top:126.5px" width="24" height="24" viewBox="0 0 24 24"><path d="M5.3,6 L7.8,4.1 L16.8,2.6 L16.2,3.6Z" fill="#6db33f" stroke="#6db33f" stroke-width=".6"/><path d="M5.3,6 L16.2,3.5 L18.2,15.7 L7.8,19.6Z" fill="url(#gGreenFace)" stroke="#6a9a4a" stroke-width=".8"/><path d="M1.7,3.5 L12,0.5 L23.3,4.4 L22.7,16.7 L10.7,23.3 L2,16.4Z M1.7,3.5 L10.7,7.7 L23.3,4.4 M10.7,7.7V23.3 M12,0.5V13.5 M2,16.4L12,13.5L22.7,16.7" fill="none" stroke="#77775e" stroke-width=".9" stroke-linejoin="round"/></svg>
<svg style="left:144.5px;top:126.5px" width="24" height="24" viewBox="0 0 24 24"><path d="M2.4,5.6 L7,3.6 L11,5 L11,9 L7,10.6 L2.4,9Z" fill="#c8c8c8"/><path d="M12.8,8 L18,5.6 L22,7 L22,12 L18.6,13.6 L18.6,17.6 L14.6,17 L14.6,12 L12.8,11.4Z" fill="#bdbdbd"/><path d="M1.7,3.5 L12,0.5 L23.3,4.4 L22.7,16.7 L10.7,23.3 L2,16.4Z M1.7,3.5 L10.7,7.7 L23.3,4.4 M10.7,7.7V23.3 M12,0.5V13.5 M2,16.4L12,13.5L22.7,16.7" fill="none" stroke="#bcbcbc" stroke-width=".9" stroke-linejoin="round"/><path d="M4.6,7.4h3.6v3H4.6z" fill="#a8a8a8" stroke="#fff" stroke-width=".5"/></svg>
<svg style="left:175.5px;top:126.5px" width="24" height="24" viewBox="0 0 24 24"><path d="M1.7,3.5 L12,0.5 L23.3,4.4 L22.7,16.7 L10.7,23.3 L2,16.4Z" fill="#ececec"/><path d="M7.6,7.2 L12,5.2 L16.8,6.6 L16.8,12.6 L12.6,14.8 L7.6,13Z" fill="#c4c4c4" stroke="#b0b0b0" stroke-width=".6"/><path d="M7.6,7.2L12.4,8.8L16.8,6.6M12.4,8.8V14.8" stroke="#b0b0b0" stroke-width=".6" fill="none"/><path d="M1.7,3.5 L12,0.5 L23.3,4.4 L22.7,16.7 L10.7,23.3 L2,16.4Z M1.7,3.5 L10.7,7.7 L23.3,4.4 M10.7,7.7V23.3" fill="none" stroke="#c0c0c0" stroke-width=".9" stroke-linejoin="round"/></svg>
<svg style="left:206.5px;top:126.5px" width="24" height="24" viewBox="0 0 24 24"><circle cx="12" cy="12.4" r="10.2" fill="url(#gGlobe)" stroke="#77775e" stroke-width="1.1"/><ellipse cx="12" cy="12.4" rx="5.2" ry="10.2" fill="none" stroke="#77775e" stroke-width=".9"/><path d="M2,12.4H22M4.4,6.4C9,8.6 15,8.6 19.6,6.4M4.4,18.4C9,16.2 15,16.2 19.6,18.4" fill="none" stroke="#8a9aa0" stroke-width=".8"/><circle cx="12" cy="2.2" r="1.5" fill="#9ae070" stroke="#5a9a3a" stroke-width=".6"/><circle cx="12" cy="22.6" r="1.5" fill="#9ae070" stroke="#5a9a3a" stroke-width=".6"/><circle cx="1.8" cy="12.4" r="1.5" fill="#9ae070" stroke="#5a9a3a" stroke-width=".6"/><circle cx="22.2" cy="12.4" r="1.5" fill="#9ae070" stroke="#5a9a3a" stroke-width=".6"/><circle cx="7" cy="15.4" r="1.5" fill="#9ae070" stroke="#5a9a3a" stroke-width=".6"/><circle cx="17" cy="15.4" r="1.5" fill="#9ae070" stroke="#5a9a3a" stroke-width=".6"/></svg>
<svg style="left:237.5px;top:126.5px" width="24" height="24" viewBox="0 0 24 24"><path d="M1.6,4.6C6,1 10,2 13,3.6S20,6 23.6,5.2M1.6,8C6,4.4 9.6,5.4 12.6,7S20,9 23.6,8.2M1.6,17.4C6,21 9.6,20 12.6,18.4S20,16.4 23.6,17.2M1.6,20.8C6,24.4 10,23.4 13,21.8S20,19.4 23.6,20.2M15.6,10.6H23.6M15.6,14.6H23.6" fill="none" stroke="#b4b4b4" stroke-width="1.1"/><circle cx="8.8" cy="12.6" r="4" fill="url(#gGrayBall)" stroke="#bdbdbd" stroke-width=".5"/></svg>
<svg style="left:268.5px;top:126.5px" width="24" height="24" viewBox="0 0 24 24"><path d="M1.6,14.4 C9,14.4 15,10 16.6,3.2 L24.6,6.6 C22,14 15,21.6 1.6,21.6Z" fill="url(#gGrayFace)" stroke="#c4c4c4" stroke-width=".5"/><path d="M1.6,17 L24.6,13 V21.6 H1.6Z" fill="#d8d8d8" opacity=".6"/></svg>
<svg style="left:299.5px;top:126.5px" width="24" height="24" viewBox="0 0 24 24"><circle cx="12" cy="12.4" r="11.4" fill="#f4f4ef" stroke="#77775e" stroke-width="1"/><circle cx="7.4" cy="8.8" r="3.1" fill="#cfe6f8" stroke="#6a8aa0" stroke-width=".9"/><circle cx="8.4" cy="18.2" r="2.5" fill="#cfe6f8" stroke="#6a8aa0" stroke-width=".9"/><circle cx="15.8" cy="13" r="4.8" fill="url(#gGreenBall)" stroke="#5a9a3c" stroke-width=".7"/></svg>
<svg style="left:330.5px;top:126.5px" width="24" height="24" viewBox="0 0 24 24"><circle cx="3" cy="3.8" r="2.7" fill="#f4f4f4" stroke="#bcbcbc" stroke-width=".9"/><circle cx="13.6" cy="14.4" r="9.6" fill="#f2f2f2" stroke="#bcbcbc" stroke-width=".9"/><circle cx="10.6" cy="19.6" r="2" fill="#f4f4f4" stroke="#bcbcbc" stroke-width=".9"/><circle cx="16.8" cy="14.6" r="4" fill="url(#gGrayBall)" stroke="#c0c0c0" stroke-width=".5"/></svg>
<div class="a" style="left:360px;top:123px;width:1px;height:33px;background:#c0c0c0;"></div><div class="a" style="left:361px;top:123px;width:1px;height:33px;background:#ffffff;"></div>
<div class="grip" style="left:365px;top:125px;height:28px"></div>
<svg style="left:373px;top:126.5px" width="24" height="24" viewBox="0 0 24 24"><path d="M2.6,1.8 H21.6 V13.4 H14.2 V21 H2.6Z" fill="url(#gBlueSq)" stroke="#6a6a56" stroke-width="1.3" stroke-linejoin="miter"/><rect x="17.4" y="16.8" width="8.2" height="8.2" fill="#6cbc44" stroke="#4a7a30" stroke-width="1" stroke-dasharray="1.4,1"/></svg>
<svg style="left:404.5px;top:126.5px" width="24" height="24" viewBox="0 0 24 24"><circle cx="7.2" cy="6.8" r="5.2" fill="#fff" stroke="#5e5e48" stroke-width="1.3"/><path d="M6.6,3.6 L7.2,7 L9.4,9.4" fill="none" stroke="#2e7ad0" stroke-width="1.3"/><circle cx="19.4" cy="6.8" r="5.4" fill="#fcc419" stroke="#a87a10" stroke-width=".8"/><rect x="16.8" y="4.4" width="5.2" height="4.8" fill="#9a7a5a" stroke="#5a4a3a" stroke-width=".5"/><path d="M16.8,4.4l5.2,4.8M22,4.4l-5.2,4.8" stroke="#5a4a3a" stroke-width=".5"/><path d="M3.4,14.6V23.8H23.4" fill="none" stroke="#8c8c72" stroke-width="1"/><path d="M4,20.6 L6,17.4 L7.4,21.2 L9.2,15.8 L10.8,21.4 L12.6,15 L14.2,21.4 L16,15.4 L17.6,21 L19.2,16.6 L20.6,20.6 L22.6,17.6" fill="none" stroke="#3a8ad8" stroke-width="1.2" stroke-linejoin="round"/></svg>
<svg style="left:435.5px;top:126.5px" width="24" height="24" viewBox="0 0 24 24"><path d="M4,1.6 L21.6,7.6 L23.6,21.6 L6.6,22.8Z" fill="#dcdcdc"/><path d="M1.6,14.6 L20.6,3.4 M5.4,23.6 L26,8" stroke="#9a9a9a" stroke-width=".8"/><path d="M6,16 L8,12 L9,16.4 L11,10 L12.4,15 L14.4,8.6 L15.6,13.4 L17.6,7.4 L18.8,11.4 L20.6,6.6" fill="none" stroke="#8e8e8e" stroke-width=".9"/><circle cx="5.4" cy="23.4" r="1" fill="#8a8a8a"/><circle cx="25.6" cy="8.4" r="1" fill="#8a8a8a"/></svg>
<svg style="left:466.5px;top:126.5px" width="24" height="24" viewBox="0 0 24 24"><circle cx="7.2" cy="6.8" r="5.2" fill="#fff" stroke="#5e5e48" stroke-width="1.3"/><path d="M6.6,3.6 L7.2,7 L9.4,9.4" fill="none" stroke="#2e7ad0" stroke-width="1.3"/><rect x="14.4" y="1.6" width="10.4" height="10.4" fill="none" stroke="#4a4a3e" stroke-width="1.3" stroke-dasharray="1.3,1.1"/><path d="M19.6,4.4 L22.6,9.6 H16.6Z" fill="#7ccc52" stroke="#5aa03a" stroke-width=".6"/><path d="M3.4,14.6V23.8H23.4" fill="none" stroke="#8c8c72" stroke-width="1"/><path d="M4,20.6 L6,17.4 L7.4,21.2 L9.2,15.8 L10.8,21.4 L12.6,15 L14.2,21.4 L16,15.4 L17.6,21 L19.2,16.6 L20.6,20.6 L22.6,17.6" fill="none" stroke="#3a8ad8" stroke-width="1.2" stroke-linejoin="round"/></svg>
<svg style="left:497.5px;top:126.5px" width="24" height="24" viewBox="0 0 24 24"><path d="M1.7,3.5 L12,0.5 L23.3,4.4 L22.7,16.7 L10.7,23.3 L2,16.4Z" fill="#ececec" stroke="#d4d4d4" stroke-width=".7"/><path d="M1.7,3.5 L10.7,7.7 L23.3,4.4M10.7,7.7V23.3" stroke="#d8d8d8" stroke-width=".7" fill="none"/><path d="M12.4,3.6V21 M4.8,14.6 L19.6,9.2 M5.4,9.6 L19.4,15.6" stroke="#bdbdbd" stroke-width="1.2"/></svg>
<div class="a" style="left:8px;top:157px;width:485px;height:859px;background:#f0f0f0;"></div>
<div class="a" style="left:8px;top:55px;width:1px;height:985px;background:#faf8f8;"></div>
<div class="a" style="left:8px;top:158px;width:480px;height:19px;background:#dadada;border-bottom:1px solid #b9b9b9;box-sizing:border-box"></div>
<div class="t " style="left:13px;top:160px;">Pipeline Browser</div>
<svg style="left:474px;top:162px" width="9" height="9" viewBox="0 0 9 9"><path d="M.8,.8L8.2,8.2M8.2,.8L.8,8.2" stroke="#000" stroke-width="1.5"/></svg>
<div class="a" style="left:8px;top:178px;width:480px;height:231px;box-sizing:border-box;background:#fff;border:1px solid #828790"></div>
<div class="a" style="left:43px;top:179px;width:1px;height:6px;background:#9e9e9e;"></div>
<div class="a" style="left:43px;top:199px;width:1px;height:169px;background:#9e9e9e;"></div>
<div class="a" style="left:43px;top:368px;width:1px;height:23px;background:#9e9e9e;"></div>
<svg style="left:39px;top:185px" width="9" height="14" viewBox="0 0 9 14"><rect x=".6" y=".6" width="7.8" height="12.8" rx=".8" fill="#d8d8d8" stroke="#111" stroke-width="1.1"/><rect x="2" y="2" width="5" height="2" fill="#222"/><rect x="2" y="5.4" width="5" height="1" fill="#666"/><rect x="1.6" y="8" width="5.8" height="4.6" fill="#a8a8a8"/></svg>
<div class="t " style="left:54px;top:185px;">builtin:</div>
<svg style="left:13px;top:210px" width="15" height="10" viewBox="0 0 15 10"><path d="M.6,5 C3.6,-.4 11.4,-.4 14.4,5 C11.4,10 3.6,10 .6,5Z" fill="#f4f4f4" stroke="#9a9a9a" stroke-width="1.1"/><circle cx="7.4" cy="4.8" r="3.3" fill="#b4b4b4"/><circle cx="7.2" cy="5" r="1.8" fill="#8a8a8a"/><circle cx="8.4" cy="3.6" r=".9" fill="#fff"/></svg>
<div class="a" style="left:39px;top:210px;width:9px;height:9px;box-sizing:border-box;background:#fff;border:1px solid #919191"></div>
<div class="a" style="left:41px;top:214px;width:5px;height:1px;background:#000;"></div>
<div class="a" style="left:48px;top:214px;width:5px;height:1px;background:#9e9e9e;"></div>
<svg style="left:53px;top:206px" width="16" height="16" viewBox="0 0 16 16"><path d="M0.5,2.3 L8.4,0.4 L15.6,4.4 L6.6,6.7Z" fill="#74b85c"/><path d="M3.4,2.8 L8.6,1.6 L13,4 L7.2,5.4Z" fill="#5e9a48" opacity=".55"/>
<path d="M0.5,2.3 L6.6,6.7 L6.6,15.2 L0.5,11.5Z" fill="#587f48"/><path d="M6.6,6.7 L15.6,4.4 L15.6,13.6 L6.6,15.2Z" fill="#7fc763"/>
<path d="M0.5,2.3 L8.4,0.4 L15.6,4.4 L15.6,13.6 L6.6,15.2 L0.5,11.5Z M0.5,2.3 L6.6,6.7 L15.6,4.4 M6.6,6.7V15.2" fill="none" stroke="#74745c" stroke-width=".9" stroke-linejoin="round"/></svg>
<div class="t " style="left:72px;top:207px;">exp-1-E-L.foam</div>
<svg style="left:13px;top:232px" width="15" height="10" viewBox="0 0 15 10"><path d="M.6,5 C3.6,-.4 11.4,-.4 14.4,5 C11.4,10 3.6,10 .6,5Z" fill="#f4f4f4" stroke="#9a9a9a" stroke-width="1.1"/><circle cx="7.4" cy="4.8" r="3.3" fill="#b4b4b4"/><circle cx="7.2" cy="5" r="1.8" fill="#8a8a8a"/><circle cx="8.4" cy="3.6" r=".9" fill="#fff"/></svg>
<div class="a" style="left:61px;top:224px;width:1px;height:4px;background:#9e9e9e;"></div>
<svg style="left:53px;top:228px" width="16" height="16" viewBox="0 0 16 16"><path d="M0.5,2.3 L8.4,0.4 L15.6,4.4 L6.6,6.7Z" fill="#74b85c"/><path d="M3.4,2.8 L8.6,1.6 L13,4 L7.2,5.4Z" fill="#5e9a48" opacity=".55"/>
<path d="M0.5,2.3 L6.6,6.7 L6.6,15.2 L0.5,11.5Z" fill="#587f48"/><path d="M6.6,6.7 L15.6,4.4 L15.6,13.6 L6.6,15.2Z" fill="#7fc763"/>
<path d="M0.5,2.3 L8.4,0.4 L15.6,4.4 L15.6,13.6 L6.6,15.2 L0.5,11.5Z M0.5,2.3 L6.6,6.7 L15.6,4.4 M6.6,6.7V15.2" fill="none" stroke="#74745c" stroke-width=".9" stroke-linejoin="round"/></svg>
<div class="t " style="left:71px;top:229px;">Contour1</div>
<svg style="left:13px;top:254px" width="15" height="10" viewBox="0 0 15 10"><path d="M.6,5 C3.6,-.4 11.4,-.4 14.4,5 C11.4,10 3.6,10 .6,5Z" fill="#f4f4f4" stroke="#9a9a9a" stroke-width="1.1"/><circle cx="7.4" cy="4.8" r="3.3" fill="#b4b4b4"/><circle cx="7.2" cy="5" r="1.8" fill="#8a8a8a"/><circle cx="8.4" cy="3.6" r=".9" fill="#fff"/></svg>
<div class="a" style="left:44px;top:258px;width:9px;height:1px;background:#9e9e9e;"></div>
<svg style="left:53px;top:250px" width="16" height="16" viewBox="0 0 16 16"><path d="M0.5,2.3 L8.4,0.4 L15.6,4.4 L6.6,6.7Z" fill="#74b85c"/><path d="M3.4,2.8 L8.6,1.6 L13,4 L7.2,5.4Z" fill="#5e9a48" opacity=".55"/>
<path d="M0.5,2.3 L6.6,6.7 L6.6,15.2 L0.5,11.5Z" fill="#587f48"/><path d="M6.6,6.7 L15.6,4.4 L15.6,13.6 L6.6,15.2Z" fill="#7fc763"/>
<path d="M0.5,2.3 L8.4,0.4 L15.6,4.4 L15.6,13.6 L6.6,15.2 L0.5,11.5Z M0.5,2.3 L6.6,6.7 L15.6,4.4 M6.6,6.7V15.2" fill="none" stroke="#74745c" stroke-width=".9" stroke-linejoin="round"/></svg>
<div class="t " style="left:72px;top:251px;">exp-1-E-L.foam</div>
<svg style="left:13px;top:276px" width="15" height="10" viewBox="0 0 15 10"><path d="M.6,5 C3.6,-.4 11.4,-.4 14.4,5 C11.4,10 3.6,10 .6,5Z" fill="#f4f4f4" stroke="#9a9a9a" stroke-width="1.1"/><circle cx="7.4" cy="4.8" r="3.3" fill="#b4b4b4"/><circle cx="7.2" cy="5" r="1.8" fill="#8a8a8a"/><circle cx="8.4" cy="3.6" r=".9" fill="#fff"/></svg>
<div class="a" style="left:39px;top:276px;width:9px;height:9px;box-sizing:border-box;background:#fff;border:1px solid #919191"></div>
<div class="a" style="left:41px;top:280px;width:5px;height:1px;background:#000;"></div>
<div class="a" style="left:48px;top:280px;width:5px;height:1px;background:#9e9e9e;"></div>
<svg style="left:53px;top:272px" width="16" height="16" viewBox="0 0 16 16"><path d="M0.5,2.3 L8.4,0.4 L15.6,4.4 L6.6,6.7Z" fill="#74b85c"/><path d="M3.4,2.8 L8.6,1.6 L13,4 L7.2,5.4Z" fill="#5e9a48" opacity=".55"/>
<path d="M0.5,2.3 L6.6,6.7 L6.6,15.2 L0.5,11.5Z" fill="#587f48"/><path d="M6.6,6.7 L15.6,4.4 L15.6,13.6 L6.6,15.2Z" fill="#7fc763"/>
<path d="M0.5,2.3 L8.4,0.4 L15.6,4.4 L15.6,13.6 L6.6,15.2 L0.5,11.5Z M0.5,2.3 L6.6,6.7 L15.6,4.4 M6.6,6.7V15.2" fill="none" stroke="#74745c" stroke-width=".9" stroke-linejoin="round"/></svg>
<div class="t " style="left:72px;top:273px;">exp-1-E-L.foam</div>
<svg style="left:13px;top:298px" width="15" height="10" viewBox="0 0 15 10"><path d="M.6,5 C3.6,-.4 11.4,-.4 14.4,5 C11.4,10 3.6,10 .6,5Z" fill="#f4f4f4" stroke="#9a9a9a" stroke-width="1.1"/><circle cx="7.4" cy="4.8" r="3.3" fill="#b4b4b4"/><circle cx="7.2" cy="5" r="1.8" fill="#8a8a8a"/><circle cx="8.4" cy="3.6" r=".9" fill="#fff"/></svg>
<div class="a" style="left:61px;top:290px;width:1px;height:4px;background:#9e9e9e;"></div>
<svg style="left:53px;top:294px" width="16" height="16" viewBox="0 0 16 16"><path d="M0.5,2.3 L8.4,0.4 L15.6,4.4 L6.6,6.7Z" fill="#74b85c"/><path d="M3.4,2.8 L8.6,1.6 L13,4 L7.2,5.4Z" fill="#5e9a48" opacity=".55"/>
<path d="M0.5,2.3 L6.6,6.7 L6.6,15.2 L0.5,11.5Z" fill="#587f48"/><path d="M6.6,6.7 L15.6,4.4 L15.6,13.6 L6.6,15.2Z" fill="#7fc763"/>
<path d="M0.5,2.3 L8.4,0.4 L15.6,4.4 L15.6,13.6 L6.6,15.2 L0.5,11.5Z M0.5,2.3 L6.6,6.7 L15.6,4.4 M6.6,6.7V15.2" fill="none" stroke="#74745c" stroke-width=".9" stroke-linejoin="round"/></svg>
<div class="t " style="left:71px;top:295px;">Glyph1</div>
<svg style="left:13px;top:320px" width="15" height="10" viewBox="0 0 15 10"><path d="M.6,5 C3.6,-.4 11.4,-.4 14.4,5 C11.4,10 3.6,10 .6,5Z" fill="#fff" stroke="#111" stroke-width="1.1"/><circle cx="7.4" cy="4.8" r="3.5" fill="#26468e"/><circle cx="7" cy="5" r="2" fill="#0a0a14"/><circle cx="8.4" cy="3.6" r=".9" fill="#fff"/></svg>
<div class="a" style="left:61px;top:312px;width:1px;height:4px;background:#9e9e9e;"></div>
<svg style="left:53px;top:316px" width="16" height="16" viewBox="0 0 16 16"><path d="M10.4,1.1 L14.8,5.5 L7.3,12.6 L9.9,15 L1.1,15 L1.1,6.1 L3.3,8.6Z" fill="url(#gArw)" stroke="#6a8c38" stroke-width=".8" stroke-linejoin="round"/></svg>
<div class="t " style="left:71px;top:317px;">PointDatasetInterpolator1</div>
<svg style="left:13px;top:342px" width="15" height="10" viewBox="0 0 15 10"><path d="M.6,5 C3.6,-.4 11.4,-.4 14.4,5 C11.4,10 3.6,10 .6,5Z" fill="#f4f4f4" stroke="#9a9a9a" stroke-width="1.1"/><circle cx="7.4" cy="4.8" r="3.3" fill="#b4b4b4"/><circle cx="7.2" cy="5" r="1.8" fill="#8a8a8a"/><circle cx="8.4" cy="3.6" r=".9" fill="#fff"/></svg>
<div class="a" style="left:39px;top:342px;width:9px;height:9px;box-sizing:border-box;background:#fff;border:1px solid #919191"></div>
<div class="a" style="left:41px;top:346px;width:5px;height:1px;background:#000;"></div>
<div class="a" style="left:48px;top:346px;width:5px;height:1px;background:#9e9e9e;"></div>
<svg style="left:53px;top:338px" width="16" height="16" viewBox="0 0 16 16"><path d="M0.5,2.3 L8.4,0.4 L15.6,4.4 L6.6,6.7Z" fill="#74b85c"/><path d="M3.4,2.8 L8.6,1.6 L13,4 L7.2,5.4Z" fill="#5e9a48" opacity=".55"/>
<path d="M0.5,2.3 L6.6,6.7 L6.6,15.2 L0.5,11.5Z" fill="#587f48"/><path d="M6.6,6.7 L15.6,4.4 L15.6,13.6 L6.6,15.2Z" fill="#7fc763"/>
<path d="M0.5,2.3 L8.4,0.4 L15.6,4.4 L15.6,13.6 L6.6,15.2 L0.5,11.5Z M0.5,2.3 L6.6,6.7 L15.6,4.4 M6.6,6.7V15.2" fill="none" stroke="#74745c" stroke-width=".9" stroke-linejoin="round"/></svg>
<div class="a" style="left:70px;top:337px;width:66px;height:18px;box-sizing:border-box;background:#ececec;border:1px dotted #ff8a1e"></div>
<div class="t " style="left:72px;top:339px;color:#ffffff">exp-10.ply</div>
<svg style="left:13px;top:364px" width="15" height="10" viewBox="0 0 15 10"><path d="M.6,5 C3.6,-.4 11.4,-.4 14.4,5 C11.4,10 3.6,10 .6,5Z" fill="#fff" stroke="#111" stroke-width="1.1"/><circle cx="7.4" cy="4.8" r="3.5" fill="#26468e"/><circle cx="7" cy="5" r="2" fill="#0a0a14"/><circle cx="8.4" cy="3.6" r=".9" fill="#fff"/></svg>
<div class="a" style="left:61px;top:356px;width:1px;height:4px;background:#9e9e9e;"></div>
<svg style="left:53px;top:360px" width="16" height="16" viewBox="0 0 16 16"><path d="M10.4,1.1 L14.8,5.5 L7.3,12.6 L9.9,15 L1.1,15 L1.1,6.1 L3.3,8.6Z" fill="url(#gArw)" stroke="#6a8c38" stroke-width=".8" stroke-linejoin="round"/></svg>
<div class="t " style="left:71px;top:361px;">PointDatasetInterpolator1</div>
<svg style="left:13px;top:386px" width="15" height="10" viewBox="0 0 15 10"><path d="M.6,5 C3.6,-.4 11.4,-.4 14.4,5 C11.4,10 3.6,10 .6,5Z" fill="#fff" stroke="#111" stroke-width="1.1"/><circle cx="7.4" cy="4.8" r="3.5" fill="#26468e"/><circle cx="7" cy="5" r="2" fill="#0a0a14"/><circle cx="8.4" cy="3.6" r=".9" fill="#fff"/></svg>
<div class="a" style="left:44px;top:390px;width:9px;height:1px;background:#9e9e9e;"></div>
<svg style="left:53px;top:382px" width="16" height="16" viewBox="0 0 16 16"><path d="M0.5,2.3 L8.4,0.4 L15.6,4.4 L6.6,6.7Z" fill="#74b85c"/><path d="M3.4,2.8 L8.6,1.6 L13,4 L7.2,5.4Z" fill="#5e9a48" opacity=".55"/>
<path d="M0.5,2.3 L6.6,6.7 L6.6,15.2 L0.5,11.5Z" fill="#587f48"/><path d="M6.6,6.7 L15.6,4.4 L15.6,13.6 L6.6,15.2Z" fill="#7fc763"/>
<path d="M0.5,2.3 L8.4,0.4 L15.6,4.4 L15.6,13.6 L6.6,15.2 L0.5,11.5Z M0.5,2.3 L6.6,6.7 L15.6,4.4 M6.6,6.7V15.2" fill="none" stroke="#74745c" stroke-width=".9" stroke-linejoin="round"/></svg>
<div class="t " style="left:71px;top:383px;">PointDatasetInterpolator1</div>
<div class="a" style="left:8px;top:414px;width:480px;height:19px;background:#dadada;border-bottom:1px solid #b9b9b9;box-sizing:border-box"></div>
<div class="t " style="left:13px;top:417px;">Properties</div>
<svg style="left:474px;top:419px" width="9" height="9" viewBox="0 0 9 9"><path d="M.8,.8L8.2,8.2M8.2,.8L.8,8.2" stroke="#000" stroke-width="1.5"/></svg>
<div class="btnd" style="left:18px;top:445px;width:112px;height:22px"></div>
<div class="btnd" style="left:134px;top:445px;width:112px;height:22px"></div>
<div class="btnd" style="left:250px;top:445px;width:112px;height:22px"></div>
<svg style="left:49px;top:448px" width="16" height="16" viewBox="0 0 16 16"><path d="M1.6,6.2 L6,4.4 L9.6,5.6 V13 L5.6,15 L1.6,13.4Z" fill="#e8e8e8" stroke="#a4a4a4" stroke-width=".8"/><path d="M5.6,8 L5.6,15 M1.6,6.2 L5.6,8 L9.6,5.6" fill="none" stroke="#b4b4b4" stroke-width=".6"/><path d="M6.6,8.4 L10.6,4.6 L9,3 L14.6,1.6 L13.4,7.4 L11.8,5.8 L7.8,9.6Z" fill="#dcdcdc" stroke="#a4a4a4" stroke-width=".7"/></svg>
<div class="t " style="left:69px;top:449px;color:#838383">Apply</div>
<svg style="left:166px;top:449px" width="14" height="14" viewBox="0 0 14 14"><circle cx="7" cy="7" r="6.2" fill="#bebebe" stroke="#b0b0b0" stroke-width=".8"/><path d="M2.6,8.6 L8.6,2.6 M4,10.6 L10.6,4 M6,12 L12,6" stroke="#d2d2d2" stroke-width="1.2"/></svg>
<div class="t " style="left:185px;top:449px;color:#838383">Reset</div>
<svg style="left:279px;top:449px" width="14" height="14" viewBox="0 0 14 14"><path d="M2.4,2.4L11.6,11.6M11.6,2.4L2.4,11.6" stroke="#b4b4b4" stroke-width="3.6" stroke-linecap="round"/><path d="M2.4,2.4L11.6,11.6M11.6,2.4L2.4,11.6" stroke="#c6c6c6" stroke-width="1.4" stroke-linecap="round" stroke-dasharray="2,1.4"/></svg>
<div class="t " style="left:298px;top:449px;color:#838383">Delete</div>
<div class="btn" style="left:366px;top:445px;width:112px;height:22px"></div>
<div class="t ss b" style="left:417.5px;top:447px;font-size:17px;line-height:18px;height:18px;color:#1e90ee;text-shadow:0 1px 0 #0a5ab4">?</div>
<div class="inp" style="left:17px;top:475px;width:437px;height:20px"></div>
<div class="t " style="left:20px;top:478px;color:#8e8e8e">Search ... (use Esc to clear text)</div>
<div class="a" style="left:457px;top:475px;width:21px;height:20px;box-sizing:border-box;background:#cce4f7;border:1px solid #0c5cab;box-shadow:inset 0 0 0 1px #5a9ad8"></div>
<svg style="left:460px;top:477px" width="16" height="16" viewBox="0 0 16 16"><g fill="#f6f6f6" stroke="#8c8c8c" stroke-width=".9" fill-rule="evenodd"><path d="M6.9,1.4h2.2l.4,1.9 1.3,.55 1.65,-1.05 1.55,1.55 -1.05,1.65 .55,1.3 1.9,.4v2.2l-1.9,.4 -.55,1.3 1.05,1.65 -1.55,1.55 -1.65,-1.05 -1.3,.55 -.4,1.9h-2.2l-.4,-1.9 -1.3,-.55 -1.65,1.05 -1.55,-1.55 1.05,-1.65 -.55,-1.3 -1.9,-.4v-2.2l1.9,-.4 .55,-1.3 -1.05,-1.65 1.55,-1.55 1.65,1.05 1.3,-.55z" stroke-linejoin="round"/><circle cx="8" cy="8" r="2.3" fill="#cce4f7"/></g></svg>
<div class="a" style="left:17px;top:502px;width:317px;height:26px;box-sizing:border-box;background:#f0f0f0;border:1px solid #a0a0a0;box-shadow:inset 0 0 0 1px #fdfdfd"></div>
<div class="a" style="left:28px;top:512px;width:13px;height:6px;box-sizing:border-box;background:#8aa0e8;border:1px solid #1c2f9a"></div>
<div class="t b" style="left:48px;top:508px;letter-spacing:-.2px">Properties (exp-10.ply)</div>
<div class="btn" style="left:339px;top:504px;width:26px;height:22px"></div><svg style="left:344.0px;top:507.0px" width="16" height="16" viewBox="0 0 16 16"><rect x="4.6" y="1.6" width="8.6" height="10" fill="#fff" stroke="#222" stroke-width="1.1"/><path d="M10.6,1.6v2.6h2.6" fill="none" stroke="#222" stroke-width=".8"/><rect x="1.6" y="4.6" width="8.6" height="10" fill="#fff" stroke="#222" stroke-width="1.1"/></svg>
<div class="btnd" style="left:371px;top:504px;width:26px;height:22px"></div><svg style="left:376.0px;top:507.0px" width="16" height="16" viewBox="0 0 16 16"><rect x="1.6" y="2.6" width="10" height="11.6" rx="1" fill="#b4b4b4" stroke="#8e8e8e" stroke-width="1"/><rect x="4" y="1.2" width="5.2" height="2.8" fill="#9a9a9a"/><path d="M6.6,6.6h5l2.4,2.4v5.6H6.6z" fill="#f4f4f4" stroke="#8e8e8e" stroke-width="1"/></svg>
<div class="btn" style="left:403px;top:504px;width:26px;height:22px"></div><svg style="left:408.0px;top:507.0px" width="16" height="16" viewBox="0 0 16 16"><path d="M2,7.4 C2,3.6 5,1.4 8.2,1.4 C10.6,1.4 12.2,2.6 13.2,3.8 L14.6,2.2 V7.2 H9.6 L11.4,5.4 C10.6,4.6 9.6,4 8.2,4 C6.2,4 4.6,5.4 4.6,7.4Z" fill="#3a8ee0" stroke="#1e5aa8" stroke-width=".6"/><path d="M14,8.6 C14,12.4 11,14.6 7.8,14.6 C5.4,14.6 3.8,13.4 2.8,12.2 L1.4,13.8 V8.8 H6.4 L4.6,10.6 C5.4,11.4 6.4,12 7.8,12 C9.8,12 11.4,10.6 11.4,8.6Z" fill="#3a8ee0" stroke="#1e5aa8" stroke-width=".6"/></svg>
<div class="btn" style="left:435px;top:504px;width:26px;height:22px"></div><svg style="left:440.0px;top:507.0px" width="16" height="16" viewBox="0 0 16 16"><path d="M2,1.6H13.4l.6,.6V14.4H2z" fill="#4a7ad4" stroke="#2a52a8" stroke-width=".8"/><rect x="4" y="1.6" width="7.6" height="6.6" fill="#ffffff"/><rect x="4.4" y="10" width="6.8" height="4.2" fill="#8a92a8"/><rect x="5.6" y="10.8" width="1.8" height="2.8" fill="#1a2238"/></svg>
<div class="a" style="left:17px;top:540px;width:317px;height:26px;box-sizing:border-box;background:#f0f0f0;border:1px solid #a0a0a0;box-shadow:inset 0 0 0 1px #fdfdfd"></div>
<div class="a" style="left:28px;top:550px;width:13px;height:6px;box-sizing:border-box;background:#8aa0e8;border:1px solid #1c2f9a"></div>
<div class="t b" style="left:48px;top:546px;letter-spacing:-.2px">Display (GeometryRepresentation)</div>
<div class="btn" style="left:339px;top:542px;width:26px;height:22px"></div><svg style="left:344.0px;top:545.0px" width="16" height="16" viewBox="0 0 16 16"><rect x="4.6" y="1.6" width="8.6" height="10" fill="#fff" stroke="#222" stroke-width="1.1"/><path d="M10.6,1.6v2.6h2.6" fill="none" stroke="#222" stroke-width=".8"/><rect x="1.6" y="4.6" width="8.6" height="10" fill="#fff" stroke="#222" stroke-width="1.1"/></svg>
<div class="btnd" style="left:371px;top:542px;width:26px;height:22px"></div><svg style="left:376.0px;top:545.0px" width="16" height="16" viewBox="0 0 16 16"><rect x="1.6" y="2.6" width="10" height="11.6" rx="1" fill="#b4b4b4" stroke="#8e8e8e" stroke-width="1"/><rect x="4" y="1.2" width="5.2" height="2.8" fill="#9a9a9a"/><path d="M6.6,6.6h5l2.4,2.4v5.6H6.6z" fill="#f4f4f4" stroke="#8e8e8e" stroke-width="1"/></svg>
<div class="btn" style="left:403px;top:542px;width:26px;height:22px"></div><svg style="left:408.0px;top:545.0px" width="16" height="16" viewBox="0 0 16 16"><path d="M2,7.4 C2,3.6 5,1.4 8.2,1.4 C10.6,1.4 12.2,2.6 13.2,3.8 L14.6,2.2 V7.2 H9.6 L11.4,5.4 C10.6,4.6 9.6,4 8.2,4 C6.2,4 4.6,5.4 4.6,7.4Z" fill="#3a8ee0" stroke="#1e5aa8" stroke-width=".6"/><path d="M14,8.6 C14,12.4 11,14.6 7.8,14.6 C5.4,14.6 3.8,13.4 2.8,12.2 L1.4,13.8 V8.8 H6.4 L4.6,10.6 C5.4,11.4 6.4,12 7.8,12 C9.8,12 11.4,10.6 11.4,8.6Z" fill="#3a8ee0" stroke="#1e5aa8" stroke-width=".6"/></svg>
<div class="btn" style="left:435px;top:542px;width:26px;height:22px"></div><svg style="left:440.0px;top:545.0px" width="16" height="16" viewBox="0 0 16 16"><path d="M2,1.6H13.4l.6,.6V14.4H2z" fill="#4a7ad4" stroke="#2a52a8" stroke-width=".8"/><rect x="4" y="1.6" width="7.6" height="6.6" fill="#ffffff"/><rect x="4.4" y="10" width="6.8" height="4.2" fill="#8a92a8"/><rect x="5.6" y="10.8" width="1.8" height="2.8" fill="#1a2238"/></svg>
<div class="a" style="left:463px;top:502px;width:15px;height:507px;background:#f0f0f0;"></div>
<div class="a" style="left:463px;top:519px;width:15px;height:157px;background:#cdcdcd;"></div>
<svg style="left:466px;top:508px" width="9" height="6" viewBox="0 0 9 6"><path d="M.6,5.2L4.5,1.2L8.4,5.2" fill="none" stroke="#555" stroke-width="1.3"/></svg>
<svg style="left:466px;top:998px" width="9" height="6" viewBox="0 0 9 6"><path d="M.6,.8L4.5,4.8L8.4,.8" fill="none" stroke="#555" stroke-width="1.3"/></svg>
<div class="t " style="left:17px;top:572px;">Representation</div>
<div class="a" style="left:123px;top:572px;width:339px;height:20px;box-sizing:border-box;background:#e1e1e1;border:1px solid #adadad"></div>
<svg style="left:449px;top:580px" width="8" height="4" viewBox="0 0 8 4"><path d="M0,0H8L4,4Z" fill="#000"/></svg>
<div class="t " style="left:127px;top:575px;">Surface</div>
<div class="t b" style="left:17px;top:599px;letter-spacing:-.2px">Coloring</div>
<div class="a" style="left:17px;top:614px;width:445px;height:1px;background:#a8a8a8;"></div>
<div class="a" style="left:17px;top:621px;width:221px;height:22px;box-sizing:border-box;background:#e1e1e1;border:1px solid #adadad"></div>
<svg style="left:225px;top:630px" width="8" height="4" viewBox="0 0 8 4"><path d="M0,0H8L4,4Z" fill="#000"/></svg>
<div class="a" style="left:23px;top:626px;width:11px;height:11px;border-radius:50%;background:#c9803e;border:1px solid #2a1a08"></div>
<div class="t " style="left:40px;top:625px;">Solid Color</div>
<div class="a" style="left:242px;top:622px;width:220px;height:20px;box-sizing:border-box;background:#cccccc;border:1px solid #bfbfbf"></div>
<svg style="left:449px;top:630px" width="9" height="6" viewBox="0 0 9 6"><path d="M1,1H9L5,5Z" fill="#fff"/><path d="M0,0H8L4,4Z" fill="#b4b4b4"/></svg>
<div class="btn" style="left:18px;top:648px;width:251px;height:22px"></div>
<svg style="left:121px;top:651px" width="16" height="16" viewBox="0 0 24 24"><rect x="3.6" y="12.8" width="19.8" height="8.6" fill="url(#gRain)" stroke="#8a7a5a" stroke-width=".5"/><path d="M3.6,17.6h19.8" stroke="#6a5a4a" stroke-width=".5" opacity=".7"/><circle cx="7.6" cy="8.8" r="6.2" fill="url(#gGreenBall)" stroke="#7ab85c" stroke-width=".8"/></svg>
<div class="t " style="left:141px;top:652px;">Edit</div>
<div class="btnd" style="left:275px;top:648px;width:26px;height:22px"></div><svg style="left:280.0px;top:651.0px" width="16" height="16" viewBox="0 0 16 16"><path d="M2,4.4 L4.6,2.4 V3.6 H11.4 V2.4 L14,4.4 L11.4,6.4 V5.2 H4.6 V6.4Z" fill="#e4e4e4" stroke="#b4b4b4" stroke-width=".6"/><path d="M2,11H14M2,8.6v4.8M6,9.8v2.4M10,9.8v2.4M14,8.6v4.8" stroke="#b0b0b0" stroke-width=".9" fill="none"/></svg>
<div class="btnd" style="left:307px;top:648px;width:26px;height:22px"></div><svg style="left:312.0px;top:651.0px" width="16" height="16" viewBox="0 0 16 16"><path d="M2,4.4 L4.6,2.4 V3.6 H11.4 V2.4 L14,4.4 L11.4,6.4 V5.2 H4.6 V6.4Z" fill="#e4e4e4" stroke="#b4b4b4" stroke-width=".6"/><path d="M2,11H14M2,8.6v4.8M6,9.8v2.4M10,9.8v2.4M14,8.6v4.8" stroke="#b0b0b0" stroke-width=".9" fill="none"/><path d="M15,8 C11.6,6.4 8.6,8.4 8.6,11.4 C8.6,14.6 11.6,15.8 15.2,14.4" fill="none" stroke="#6c6c6c" stroke-width="2.3"/></svg>
<div class="btnd" style="left:339px;top:648px;width:26px;height:22px"></div><svg style="left:344.0px;top:651.0px" width="16" height="16" viewBox="0 0 16 16"><path d="M2,4.4 L4.6,2.4 V3.6 H11.4 V2.4 L14,4.4 L11.4,6.4 V5.2 H4.6 V6.4Z" fill="#e4e4e4" stroke="#b4b4b4" stroke-width=".6"/><path d="M2,11H14M2,8.6v4.8M6,9.8v2.4M10,9.8v2.4M14,8.6v4.8" stroke="#b0b0b0" stroke-width=".9" fill="none"/><text x="8.6" y="14.8" font-family="Liberation Sans,sans-serif" font-style="italic" font-weight="bold" font-size="14.5" fill="#686868" stroke="#686868" stroke-width=".3">t</text></svg>
<div class="btnd" style="left:371px;top:648px;width:26px;height:22px"></div><svg style="left:376.0px;top:651.0px" width="16" height="16" viewBox="0 0 16 16"><path d="M2.6,3 L9,1.6 L11,9 L5,11Z" fill="#ededed" stroke="#c0c0c0" stroke-width=".6"/><path d="M9.6,14.6 C5.6,11.4 5,9.4 6.2,8 C7.4,6.8 9,7.4 9.6,8.6 C10.2,7.4 11.8,6.8 13,8 C14.2,9.4 13.6,11.4 9.6,14.6Z" fill="#9a9a9a"/></svg>
<div class="btnd" style="left:403px;top:648px;width:26px;height:22px"></div><svg style="left:408.0px;top:651.0px" width="16" height="16" viewBox="0 0 16 16"><defs><linearGradient id="gdb" x1="0" y1="0" x2="0" y2="1"><stop offset="0" stop-color="#d8d8d8"/><stop offset="1" stop-color="#8e8e8e"/></linearGradient></defs><rect x="4.6" y="1.6" width="6.8" height="12.8" fill="url(#gdb)" stroke="#b4b4b4" stroke-width=".5"/></svg>
<div class="btnd" style="left:435px;top:648px;width:26px;height:22px"></div><svg style="left:440.0px;top:651.0px" width="16" height="16" viewBox="0 0 16 16"><rect x="2.6" y="1" width="6.6" height="11.6" fill="#c8c8c8" stroke="#b4b4b4" stroke-width=".5"/><text x="4.4" y="15.6" font-family="Liberation Sans,sans-serif" font-weight="bold" font-style="italic" font-size="15.5" fill="#686868">e</text></svg>
<div class="t b" style="left:17px;top:678px;letter-spacing:-.2px">Scalar Coloring</div>
<div class="a" style="left:17px;top:693px;width:445px;height:1px;background:#a8a8a8;"></div>
<div class="a" style="left:17px;top:701px;width:13px;height:13px;box-sizing:border-box;background:#fff;border:1px solid #333"></div>
<svg style="left:18px;top:702px" width="11" height="11" viewBox="0 0 11 11"><path d="M1.6,5.6L4.2,8.4L9.4,2.4" fill="none" stroke="#222" stroke-width="1.2"/></svg>
<div class="t " style="left:34px;top:701px;">Map Scalars</div>
<div class="a" style="left:17px;top:721px;width:13px;height:13px;box-sizing:border-box;background:#fff;border:1px solid #333"></div>
<svg style="left:18px;top:722px" width="11" height="11" viewBox="0 0 11 11"><path d="M1.6,5.6L4.2,8.4L9.4,2.4" fill="none" stroke="#222" stroke-width="1.2"/></svg>
<div class="t " style="left:34px;top:721px;">Interpolate Scalars Before Mapping</div>
<div class="t b" style="left:17px;top:743px;letter-spacing:-.2px">Styling</div>
<div class="a" style="left:17px;top:758px;width:445px;height:1px;background:#a8a8a8;"></div>
<div class="t " style="left:17px;top:764px;">Opacity</div>
<div class="a" style="left:123px;top:774px;width:166px;height:3px;box-sizing:border-box;background:#e7eaea;border:1px solid #d6d6d6"></div><div class="a" style="left:279px;top:765px;width:10px;height:21px;background:#0078d7;"></div>
<div class="inp" style="left:296px;top:766px;width:166px;height:20px"></div>
<div class="t " style="left:299px;top:769px;">1</div>
<div class="t " style="left:17px;top:790px;">Point Size</div>
<div class="inp" style="left:123px;top:791px;width:339px;height:20px"></div>
<div class="t " style="left:126px;top:794px;">2</div>
<div class="t " style="left:17px;top:814px;">Line Width</div>
<div class="inp" style="left:123px;top:815px;width:339px;height:20px"></div>
<div class="t " style="left:126px;top:818px;">1</div>
<div class="t b" style="left:17px;top:842px;letter-spacing:-.2px">Lighting</div>
<div class="a" style="left:17px;top:857px;width:445px;height:1px;background:#a8a8a8;"></div>
<div class="t " style="left:17px;top:863px;">Interpolation</div>
<div class="a" style="left:123px;top:864px;width:339px;height:20px;box-sizing:border-box;background:#e1e1e1;border:1px solid #adadad"></div>
<svg style="left:449px;top:872px" width="8" height="4" viewBox="0 0 8 4"><path d="M0,0H8L4,4Z" fill="#000"/></svg>
<div class="t " style="left:127px;top:867px;">Gouraud</div>
<div class="t " style="left:17px;top:888px;">Specular</div>
<div class="a" style="left:123px;top:897px;width:166px;height:3px;box-sizing:border-box;background:#e7eaea;border:1px solid #d6d6d6"></div><div class="a" style="left:123px;top:888px;width:10px;height:21px;background:#0078d7;"></div>
<div class="inp" style="left:296px;top:889px;width:166px;height:20px"></div>
<div class="t " style="left:299px;top:892px;">0</div>
<div class="btn" style="left:18px;top:915px;width:443px;height:20px"></div>
<div class="a" style="left:23px;top:917px;width:15px;height:15px;box-sizing:border-box;border-radius:50%;background:#fff;border:1px solid #222"></div>
<div class="t " style="left:42px;top:918px;">Specular Color</div>
<div class="t " style="left:17px;top:940px;">Specular Power</div>
<div class="a" style="left:123px;top:949px;width:166px;height:3px;box-sizing:border-box;background:#e7eaea;border:1px solid #d6d6d6"></div><div class="a" style="left:279px;top:940px;width:10px;height:21px;background:#0078d7;"></div>
<div class="inp" style="left:296px;top:941px;width:166px;height:20px"></div>
<div class="t " style="left:299px;top:944px;">100</div>
<div class="t " style="left:17px;top:965px;">Ambient</div>
<div class="a" style="left:123px;top:975px;width:166px;height:3px;box-sizing:border-box;background:#e7eaea;border:1px solid #d6d6d6"></div><div class="a" style="left:123px;top:966px;width:10px;height:21px;background:#0078d7;"></div>
<div class="inp" style="left:296px;top:967px;width:166px;height:20px"></div>
<div class="t " style="left:299px;top:970px;">0</div>
<div class="a" style="left:8px;top:988px;width:456px;height:21px;overflow:hidden">
<div class="t " style="left:9px;top:3px;">Diffuse</div>
<div class="a" style="left:115px;top:13px;width:166px;height:3px;box-sizing:border-box;background:#e7eaea;border:1px solid #d6d6d6"></div>
<div class="a" style="left:271px;top:4px;width:10px;height:21px;background:#0078d7;"></div>
<div class="inp" style="left:288px;top:5px;width:166px;height:20px"></div>
<div class="t " style="left:291px;top:8px;">1</div>
</div>
<div class="a" style="left:493px;top:157px;width:1427px;height:859px;background:#ffffff;"></div>
<div class="a" style="left:599px;top:157px;width:1321px;height:20px;background:#f0f0f0;"></div>
<div class="a" style="left:599px;top:176px;width:1321px;height:1px;background:#d9d9d9;"></div>
<div class="a" style="left:599px;top:159px;width:28px;height:18px;box-sizing:border-box;background:#f0f0f0;border:1px solid #d9d9d9;border-bottom:none"></div>
<div class="a" style="left:493px;top:157px;width:106px;height:1px;background:#e4e4e4;"></div>
<div class="a" style="left:504px;top:161px;width:10px;height:9px;box-sizing:border-box;border:1px solid #000;border-top-width:2px;background:#fff"></div>
<div class="t " style="left:518px;top:159px;">Layout #1</div>
<svg style="left:576px;top:162px" width="9" height="9" viewBox="0 0 9 9"><path d="M.8,.8L8.2,8.2M8.2,.8L.8,8.2" stroke="#000" stroke-width="1.4"/></svg>
<div class="t " style="left:610px;top:159px;">+</div>
<svg style="left:495px;top:179px" width="16" height="16" viewBox="0 0 16 16"><rect x="6.6" y="3.4" width="7.4" height="6" rx=".8" fill="#b4b4a4" stroke="#77775e" stroke-width=".9"/><rect x="7.6" y="2.4" width="2.6" height="1.4" fill="#8a8a78"/><circle cx="10.3" cy="6.4" r="1.9" fill="#e4e4dc" stroke="#77775e" stroke-width=".7"/><path d="M2.2,10.8 L7,9.4 L6.2,11 C8.6,10.8 9.8,12.6 9,14 C8.4,15 7,15.4 6,15 C7.2,14.2 7.4,13.2 6.6,12.8 C6,12.4 5.4,12.6 5,12.8 L4.6,14.4Z" fill="#f0503a" stroke="#c04a30" stroke-width=".4"/></svg>
<svg style="left:514px;top:179px" width="16" height="16" viewBox="0 0 16 16"><rect x="3" y="3" width="7.4" height="5.8" rx=".8" fill="#d0d0d0" stroke="#b4b4b4" stroke-width=".8"/><circle cx="6.6" cy="5.8" r="1.6" fill="#e8e8e8" stroke="#b4b4b4" stroke-width=".6"/><rect x="5.6" y="6" width="6" height="4.6" rx=".8" fill="#d4d4d4" stroke="#b4b4b4" stroke-width=".7"/><path d="M8,14.6 C6.4,13 7.2,10.6 9.8,10.8 L9.4,9.6 L13.8,11.6 L10.2,14.2 L10,12.8 C9,12.6 8.2,13.4 8,14.6Z" fill="#c0c0c0"/></svg>
<div class="a" style="left:534px;top:180px;width:1px;height:14px;background:#c8c8c8;"></div>
<svg style="left:539px;top:179px" width="16" height="16" viewBox="0 0 16 16"><text x="2.4" y="12" font-family="Liberation Sans,sans-serif" font-size="10.6" fill="#4e4e4e" letter-spacing="-.8">3D</text></svg>
<svg style="left:558px;top:179px" width="16" height="16" viewBox="0 0 16 16"><rect x="2.8" y="3.6" width="9.8" height="8" rx="1" fill="#a4a494" stroke="#6e6e58" stroke-width="1"/><rect x="4" y="2.4" width="3.4" height="1.6" fill="#8a8a78"/><circle cx="7.4" cy="7.6" r="2.4" fill="#c8c8bc" stroke="#6e6e58" stroke-width=".8"/><circle cx="11" cy="11.6" r="3" fill="#6cc848" stroke="#4a9a2c" stroke-width=".5"/><circle cx="11" cy="11.6" r="1.3" fill="none" stroke="#e8ffe0" stroke-width=".8"/></svg>
<div class="a" style="left:578px;top:180px;width:1px;height:14px;background:#c8c8c8;"></div>
<svg style="left:583px;top:179px" width="16" height="16" viewBox="0 0 16 16"><rect x="3.5" y="3" width="9.4" height="9.4" fill="none" stroke="#333" stroke-width="1" stroke-dasharray="1,1"/><path d="M6.6,3.6v4.4M4.4,5.8h4.4" stroke="#1f8a12" stroke-width="1.5"/><path d="M9.4,7.8 L13.8,10.8 L12,11.1 L13.2,13.6 L12.2,14 L11,11.6 L9.8,12.8Z" fill="#77735a" stroke="#66624c" stroke-width=".3"/></svg>
<svg style="left:602px;top:179px" width="16" height="16" viewBox="0 0 16 16"><rect x="3.5" y="3" width="9.4" height="9.4" fill="none" stroke="#333" stroke-width="1" stroke-dasharray="1,1"/><path d="M4.6,5.6h4.6" stroke="#f01414" stroke-width="1.5"/><path d="M9.4,7.8 L13.8,10.8 L12,11.1 L13.2,13.6 L12.2,14 L11,11.6 L9.8,12.8Z" fill="#77735a" stroke="#66624c" stroke-width=".3"/></svg>
<svg style="left:621px;top:179px" width="16" height="16" viewBox="0 0 16 16"><rect x="3.5" y="3" width="9.4" height="9.4" fill="none" stroke="#333" stroke-width="1" stroke-dasharray="1,1"/><path d="M6.8,3v4M4.8,5h4" stroke="#1f8a12" stroke-width="1.4"/><path d="M4.6,9h4.8" stroke="#f01414" stroke-width="1.5"/><path d="M9.4,7.8 L13.8,10.8 L12,11.1 L13.2,13.6 L12.2,14 L11,11.6 L9.8,12.8Z" fill="#77735a" stroke="#66624c" stroke-width=".3"/></svg>
<div class="a" style="left:641px;top:180px;width:1px;height:14px;background:#c8c8c8;"></div>
<svg style="left:645.5px;top:179px" width="16" height="16" viewBox="0 0 16 16"><rect x="3.5" y="3" width="9.4" height="9.4" fill="none" stroke="#333" stroke-width="1" stroke-dasharray="1,1"/><path d="M8,4.6L11.4,11.4H4.6Z" fill="#8ed468" stroke="#6ab44a" stroke-width=".5"/><path d="M9.4,7.8 L13.8,10.8 L12,11.1 L13.2,13.6 L12.2,14 L11,11.6 L9.8,12.8Z" fill="#77735a" stroke="#66624c" stroke-width=".3"/></svg>
<svg style="left:664.5px;top:179px" width="16" height="16" viewBox="0 0 16 16"><rect x="3.5" y="3" width="9.4" height="9.4" fill="none" stroke="#333" stroke-width="1" stroke-dasharray="1,1"/><path d="M8,4.8L11.2,11M8,4.8L5,11H11" stroke="#cfe8c4" stroke-width=".5" fill="none"/><circle cx="8" cy="4.6" r=".8" fill="#f03a2a"/><circle cx="5" cy="10.8" r=".8" fill="#f03a2a"/><path d="M9.4,7.8 L13.8,10.8 L12,11.1 L13.2,13.6 L12.2,14 L11,11.6 L9.8,12.8Z" fill="#77735a" stroke="#66624c" stroke-width=".3"/></svg>
<svg style="left:683.5px;top:179px" width="16" height="16" viewBox="0 0 16 16"><path d="M3.4,4.6 L7,3.4 L7,10 L3.4,11Z" fill="none" stroke="#5a6a4a" stroke-width=".8" stroke-dasharray="1,1"/><path d="M6.4,4.6 L9.6,3 L14,4.2 L14,9.6 L10.4,11.6 L6.4,10.4Z" fill="#86cc60" stroke="#5aa03a" stroke-width=".7"/><path d="M8.4,6.2h3v2.6h-3z" fill="#b8e8a0" stroke="#4a8a2a" stroke-width=".5"/><path d="M9.4,7.8 L13.8,10.8 L12,11.1 L13.2,13.6 L12.2,14 L11,11.6 L9.8,12.8Z" fill="#77735a" stroke="#66624c" stroke-width=".3"/></svg>
<svg style="left:702.5px;top:179px" width="16" height="16" viewBox="0 0 16 16"><rect x="2.6" y="2.6" width="8.6" height="9.6" fill="none" stroke="#4a4a3a" stroke-width="1" stroke-dasharray="1.1,1.1"/><path d="M1.2,4.4h12.6M1.2,10.4h12.6" stroke="#d44" stroke-width=".5" stroke-dasharray="1,1.2"/><circle cx="2.6" cy="4.4" r=".9" fill="#e82a1a"/><circle cx="13" cy="4.4" r=".9" fill="#e82a1a"/><circle cx="2.6" cy="10.4" r=".9" fill="#e82a1a"/><circle cx="13" cy="8" r=".9" fill="#e82a1a"/><path d="M9.4,7.8 L13.8,10.8 L12,11.1 L13.2,13.6 L12.2,14 L11,11.6 L9.8,12.8Z" fill="#77735a" stroke="#66624c" stroke-width=".3"/></svg>
<svg style="left:721.5px;top:179px" width="16" height="16" viewBox="0 0 16 16"><path d="M2,2.6 L11.6,4 L7.6,7.6 L12,12 L2.6,13Z" fill="none" stroke="#3a3a30" stroke-width="1" stroke-dasharray="1.4,1"/><path d="M4,5 L8.4,5.6 L5.8,8 L8.6,11 L4.2,11.4Z" fill="#7ccc52"/><path d="M9.4,7.8 L13.8,10.8 L12,11.1 L13.2,13.6 L12.2,14 L11,11.6 L9.8,12.8Z" fill="#77735a" stroke="#66624c" stroke-width=".3"/></svg>
<svg style="left:740.5px;top:179px" width="16" height="16" viewBox="0 0 16 16"><path d="M2,2.6 L11.6,4 L7.6,7.6 L12,12 L2.6,13Z" fill="none" stroke="#3a3a30" stroke-width="1" stroke-dasharray="1.4,1"/><circle cx="4.6" cy="5" r=".9" fill="#e82a1a"/><circle cx="8.6" cy="5.6" r=".9" fill="#e82a1a"/><circle cx="5" cy="10.6" r=".9" fill="#e82a1a"/><circle cx="9" cy="10" r=".9" fill="#e82a1a"/><path d="M9.4,7.8 L13.8,10.8 L12,11.1 L13.2,13.6 L12.2,14 L11,11.6 L9.8,12.8Z" fill="#77735a" stroke="#66624c" stroke-width=".3"/></svg>
<svg style="left:759.5px;top:179px" width="16" height="16" viewBox="0 0 16 16"><rect x="2.6" y="4.6" width="10" height="8" fill="none" stroke="#b4b4b4" stroke-width="1" stroke-dasharray="1.1,1.1"/><rect x="4.6" y="6.6" width="5" height="4" fill="#c8c8c8"/><path d="M9.4,8.6 L15,12.2 L12.8,12.6 L14.2,15.4 L13,16 L11.6,13.2 L10,14.6Z" fill="#b0b0a8"/></svg>
<svg style="left:778.5px;top:179px" width="16" height="16" viewBox="0 0 16 16"><path d="M7,3.6L11,11.4H3Z" fill="#6cbc44" stroke="#4a9a2c" stroke-width=".5"/><path d="M9.4,7.8 L13.8,10.8 L12,11.1 L13.2,13.6 L12.2,14 L11,11.6 L9.8,12.8Z" fill="#77735a" stroke="#66624c" stroke-width=".3"/></svg>
<svg style="left:798px;top:179px" width="16" height="16" viewBox="0 0 16 16"><path d="M7,4L10.6,11M7,4L3.4,11" stroke="#ccc" stroke-width=".6"/><circle cx="7" cy="3.8" r=".9" fill="#f03a2a"/><circle cx="3.4" cy="11.2" r=".9" fill="#f03a2a"/><path d="M9.4,7.8 L13.8,10.8 L12,11.1 L13.2,13.6 L12.2,14 L11,11.6 L9.8,12.8Z" fill="#77735a" stroke="#66624c" stroke-width=".3"/></svg>
<svg style="left:817.5px;top:179px" width="16" height="16" viewBox="0 0 16 16"><circle cx="2.4" cy="9.4" r="1.1" fill="#e82a1a"/><text x="5" y="14" font-family="Liberation Sans,sans-serif" font-size="12.5" fill="#444">?</text></svg>
<svg style="left:836px;top:179px" width="16" height="16" viewBox="0 0 16 16"><path d="M4.4,7.6L8,14H.8Z" fill="#8fd468" stroke="#5aa03a" stroke-width=".6"/><text x="6.6" y="13" font-family="Liberation Sans,sans-serif" font-size="12.5" fill="#444">?</text></svg>
<svg style="left:854.5px;top:179px" width="16" height="16" viewBox="0 0 16 16"><path d="M3.6,5h9l-.7,9H4.3z" fill="#b4b4b4"/><path d="M3,3.4h10.2v1.6H3z M6.2,2.2h3.8v1.4H6.2z" fill="#c0c0c0"/><path d="M6,6.4v6M8.1,6.4v6M10.2,6.4v6" stroke="#a8a8a8" stroke-width=".6"/></svg>
<div class="t b" style="left:1737px;top:180px;letter-spacing:-.2px">RenderView1</div>
<div class="a" style="left:1737px;top:191px;width:77px;height:1px;background:#000;"></div>
<div class="btn" style="left:1826px;top:179px;width:17px;height:16px"></div>
<svg style="left:1826px;top:179px" width="17" height="16" viewBox="0 0 17 16"><rect x="4.5" y="3.5" width="8" height="9" fill="#fff" stroke="#000"/><path d="M8.5,3.5v9" stroke="#000"/><rect x="5" y="4" width="3" height="8" fill="#d0d8f8"/></svg>
<div class="btn" style="left:1846px;top:179px;width:17px;height:16px"></div>
<svg style="left:1846px;top:179px" width="17" height="16" viewBox="0 0 17 16"><rect x="4.5" y="3.5" width="8" height="9" fill="#fff" stroke="#000"/><path d="M4.5,8h8" stroke="#000"/><rect x="5" y="4" width="7" height="3.5" fill="#d0d8f8"/></svg>
<div class="btn" style="left:1866px;top:179px;width:17px;height:16px"></div>
<svg style="left:1866px;top:179px" width="17" height="16" viewBox="0 0 17 16"><rect x="4.5" y="4" width="8" height="8" fill="#fff" stroke="#000"/><path d="M4,4.2h9" stroke="#000" stroke-width="1.6"/></svg>
<div class="btn" style="left:1886px;top:179px;width:17px;height:16px"></div>
<svg style="left:1886px;top:179px" width="17" height="16" viewBox="0 0 17 16"><rect x="7" y="3.5" width="5.5" height="5" fill="#e1e1e1" stroke="#000" stroke-width="1.2"/><rect x="4.5" y="7" width="5.5" height="5" fill="#fff" stroke="#000" stroke-width="1.2"/></svg>
<div class="btn" style="left:1906px;top:179px;width:17px;height:16px"></div>
<svg style="left:1906px;top:179px" width="17" height="16" viewBox="0 0 17 16"><path d="M5,4.4l7,7M12,4.4l-7,7" stroke="#000" stroke-width="1.5"/></svg>
<div class="a" style="left:494px;top:198px;width:1440px;height:816px;box-sizing:border-box;border:2px solid #0000ff;background:#fff"></div>
<svg class="a" style="left:497px;top:201px" width="1423" height="810" viewBox="497 201 1423 810">
<defs>
<linearGradient id="bg" x1="0" y1="0" x2="0" y2="1"><stop offset="0" stop-color="#99cbe4"/><stop offset="1" stop-color="#f0f0f1"/></linearGradient>
<clipPath id="wedge"><path d="M673.5,670.1 L1556,201 L1585,201 C1725.2,311 1756.4,314 1920,564 L1920,806.4 Z"/></clipPath>
<clipPath id="bright"><polygon points="673.5,670.1 1160,412 1176,432 1196,452 1210,472 1200,480 1204,492 1192,505 1196,518 1184,530 1186,542 1172,552 1178,566 1186,574 1290,605 1206,620 1100,637 1120,650 1140,668 1166,682 1186,700 1210,712 1247,733 1247,742"/></clipPath>
<filter id="b06" x="-5%" y="-5%" width="110%" height="110%"><feGaussianBlur stdDeviation="0.7"/></filter>
<filter id="b12" x="-5%" y="-5%" width="110%" height="110%"><feGaussianBlur stdDeviation="1.3"/></filter>
<filter id="b3" x="-10%" y="-10%" width="120%" height="120%"><feGaussianBlur stdDeviation="3"/></filter>
<linearGradient id="gNavyTop" gradientUnits="userSpaceOnUse" x1="1300" y1="300" x2="1400" y2="480"><stop offset="0" stop-color="#00005e"/><stop offset="1" stop-color="#000050"/></linearGradient>
<linearGradient id="gLow" gradientUnits="userSpaceOnUse" x1="1100" y1="0" x2="1920" y2="0"><stop offset="0" stop-color="#000054"/><stop offset="1" stop-color="#000048"/></linearGradient>
<linearGradient id="gDR" gradientUnits="userSpaceOnUse" x1="1020" y1="520" x2="1120" y2="580"><stop offset="0" stop-color="#6a0000"/><stop offset=".5" stop-color="#480000"/><stop offset="1" stop-color="#3c0000"/></linearGradient>
<radialGradient id="gOr" cx="0.62" cy="0.45" r="0.6"><stop offset="0" stop-color="#d89c00"/><stop offset="1" stop-color="#9a6e00"/></radialGradient>
<radialGradient id="gGy" cx="0.55" cy="0.68" r="0.38"><stop offset="0" stop-color="#2cd818"/><stop offset="1" stop-color="#0c5e0c"/></radialGradient>
</defs>
<rect x="497" y="201" width="1423" height="810" fill="url(#bg)"/>
<g clip-path="url(#wedge)">
<rect x="497" y="201" width="1423" height="810" fill="url(#gNavyTop)"/>
<polygon points="1160.0,412.0 1556.0,201.0 1585.0,201.0 1640.0,244.0 1215.0,432.0" fill="#000068" filter="url(#b3)"/>
<polygon points="1150.0,405.0 1556.0,190.0 1600.0,201.0 1190.0,426.0" fill="#00006a" />
<polygon points="1205.0,462.0 1222.0,462.0 1222.0,460.1 1232.0,460.1 1252.0,460.1 1252.0,458.8 1262.0,458.8 1285.0,458.8 1285.0,457.7 1295.0,457.7 1320.0,457.7 1320.0,456.5 1330.0,456.5 1362.0,456.5 1362.0,455.3 1372.0,455.3 1405.0,455.3 1405.0,454.1 1415.0,454.1 1450.0,454.1 1450.0,453.0 1460.0,453.0 1500.0,453.0 1500.0,451.8 1510.0,451.8 1550.0,451.8 1550.0,450.7 1560.0,450.7 1605.0,450.7 1605.0,449.5 1615.0,449.5 1660.0,449.5 1660.0,448.3 1670.0,448.3 1715.0,448.3 1715.0,447.2 1725.0,447.2 1770.0,447.2 1770.0,446.1 1780.0,446.1 1828.0,446.1 1828.0,445.0 1838.0,445.0 1930.0,560.0 1930.0,683.0 1174.0,552.0 1186.0,542.0 1184.0,530.0 1196.0,518.0 1192.0,505.0 1204.0,492.0 1200.0,480.0 1210.0,472.0" fill="#000039" filter="url(#b06)"/>
<polygon points="1174.0,552.0 1930.0,683.0 1930.0,820.0 1100.0,720.0 1100.0,632.0" fill="url(#gLow)" />
<polygon points="1178.0,566.0 1500.0,640.0 1930.0,724.0 1930.0,690.0 1174.0,552.0" fill="#000042" filter="url(#b3)"/>
<polygon points="1206.0,616.0 1290.0,604.0 1400.0,620.0 1560.0,650.0 1700.0,690.0 1560.0,680.0 1400.0,650.0 1300.0,640.0 1247.0,650.0 1180.0,640.0" fill="#000068" filter="url(#b12)"/>
<g clip-path="url(#bright)"><rect x="600" y="380" width="700" height="400" fill="#0000d2"/>
<g filter="url(#b06)"><polygon points="702.3,673.2 723.2,675.5 714.7,657.7 697.8,662.8" fill="#0028e6" /><polygon points="699.7,662.2 714.0,657.9 712.4,649.5 695.9,658.2" fill="#0000d7" /><polygon points="723.5,675.6 741.5,677.5 740.9,673.7 722.2,672.7" fill="#0000c2" /><polygon points="722.1,672.7 743.0,673.8 729.0,640.6 713.0,649.1" fill="#0000c0" /><polygon points="744.7,677.9 761.7,679.7 746.5,645.4 732.8,650.0" fill="#0000e1" /><polygon points="734.9,649.3 745.8,645.6 740.5,634.6 727.2,641.6" fill="#0000e1" /><polygon points="760.6,679.6 779.4,681.7 766.8,659.2 753.1,660.8" fill="#0000c3" /><polygon points="755.5,660.5 768.8,659.0 757.9,625.3 739.7,635.0" fill="#0000d6" /><polygon points="780.6,681.8 799.3,683.8 787.9,656.3 767.8,658.7" fill="#0000dd" /><polygon points="770.4,658.4 789.1,656.2 786.7,646.5 766.8,650.6" fill="#0000d1" /><polygon points="768.0,650.4 785.4,646.8 775.9,615.8 754.9,626.9" fill="#0000d9" /><polygon points="802.0,684.1 816.9,685.8 803.6,650.7 787.6,653.1" fill="#0000c2" /><polygon points="789.2,652.8 805.3,650.4 796.9,626.4 781.2,632.0" fill="#0000ce" /><polygon points="778.1,633.1 792.5,628.0 790.6,616.1 773.8,623.9" fill="#0000e3" /><polygon points="775.1,623.2 788.0,617.3 787.2,609.8 774.3,616.6" fill="#0000cb" /><polygon points="821.3,686.3 845.5,688.9 824.3,642.3 802.6,646.3" fill="#0000cf" /><polygon points="802.2,646.4 822.7,642.6 815.0,627.1 799.2,631.9" fill="#0000d1" /><polygon points="797.1,632.5 814.5,627.3 814.3,620.1 794.5,627.2" fill="#0000e9" /><polygon points="792.0,628.0 812.4,620.8 804.9,600.4 787.7,609.5" fill="#0000e9" /><polygon points="844.2,688.8 863.8,690.9 853.8,670.7 836.3,670.7" fill="#0000c5" /><polygon points="834.3,670.7 855.0,670.7 848.9,653.0 830.0,654.8" fill="#0000da" /><polygon points="830.5,654.8 846.6,653.2 842.0,636.6 821.6,640.6" fill="#0000c6" /><polygon points="822.5,640.5 840.5,636.9 840.1,636.2 823.8,639.5" fill="#0000e0" /><polygon points="820.7,640.1 838.9,636.5 824.0,595.2 805.5,604.4" fill="#0000d3" /><polygon points="809.4,602.4 823.9,595.2 820.7,592.0 804.0,600.9" fill="#0000d9" /><polygon points="862.1,690.7 884.4,693.2 879.2,678.7 859.8,677.9" fill="#00006f" /><polygon points="855.9,677.7 880.2,678.7 880.2,676.0 853.5,675.3" fill="#000078" /><polygon points="858.2,675.4 877.8,676.0 866.8,646.9 842.6,649.8" fill="#0000b6" /><polygon points="846.4,649.3 863.6,647.3 839.2,587.9 825.0,594.9" fill="#0000bd" /><polygon points="822.4,596.2 841.6,586.7 839.4,582.1 821.3,591.7" fill="#0000d2" /><polygon points="883.2,693.0 904.8,695.4 896.7,687.3 884.8,686.4" fill="#00003c" /><polygon points="884.1,686.4 897.5,687.4 894.2,676.3 880.2,675.9" fill="#000056" /><polygon points="879.1,675.9 895.8,676.4 863.7,604.2 851.7,608.3" fill="#000092" /><polygon points="850.1,608.9 865.5,603.5 864.1,601.4 849.7,606.6" fill="#0000e1" /><polygon points="847.2,607.4 863.2,601.7 858.6,597.8 845.0,603.1" fill="#0000dc" /><polygon points="847.1,602.3 862.0,596.5 853.5,574.6 836.7,583.5" fill="#0018d7" /><polygon points="903.0,695.2 921.4,697.2 894.2,631.2 876.1,634.3" fill="#0000b5" /><polygon points="878.7,633.9 892.7,631.4 891.1,623.5 875.8,626.8" fill="#0000e2" /><polygon points="871.2,627.8 890.5,623.7 888.1,623.3 871.6,626.9" fill="#0000bd" /><polygon points="874.6,626.3 892.7,622.3 883.7,611.6 869.6,615.5" fill="#0000d9" /><polygon points="870.5,615.3 888.1,610.4 877.3,595.3 864.5,600.0" fill="#0000cd" /><polygon points="864.7,599.9 880.4,594.2 870.4,579.8 855.7,586.5" fill="#0000d2" /><polygon points="854.6,587.1 871.2,579.4 868.3,566.8 849.2,576.9" fill="#0000d4" /><polygon points="920.3,697.1 933.7,698.5 931.8,683.4 914.2,682.5" fill="#00004e" /><polygon points="917.5,682.7 928.6,683.2 925.3,676.9 915.6,676.7" fill="#00008c" /><polygon points="910.4,676.5 928.6,677.0 903.1,620.1 888.1,623.3" fill="#0000b9" /><polygon points="892.4,622.4 901.1,620.5 899.6,605.6 884.8,609.9" fill="#0000ca" /><polygon points="887.3,609.1 896.4,606.5 887.7,587.8 877.6,591.7" fill="#0000c5" /><polygon points="875.7,592.4 887.3,588.0 879.9,568.1 868.7,573.6" fill="#0000c8" /><polygon points="868.6,573.7 881.4,567.4 879.2,566.8 868.3,572.2" fill="#0000ba" /><polygon points="866.7,573.1 881.9,565.4 879.0,561.1 865.7,568.2" fill="#0000d0" /><polygon points="939.6,699.2 951.4,700.5 926.1,633.1 911.2,635.3" fill="#000061" /><polygon points="907.6,635.9 925.5,633.2 920.5,628.2 905.9,630.6" fill="#0000be" /><polygon points="909.9,630.0 922.8,627.8 917.0,619.5 903.0,622.5" fill="#0000c8" /><polygon points="902.5,622.6 918.0,619.4 916.3,618.0 906.3,620.1" fill="#0000e8" /><polygon points="902.4,621.0 920.2,617.2 906.8,594.6 893.7,598.8" fill="#0000ba" /><polygon points="894.4,598.6 907.8,594.3 898.8,577.3 887.5,582.0" fill="#0000ba" /><polygon points="885.4,582.8 899.8,576.9 888.9,555.9 876.4,562.4" fill="#0000c8" /><polygon points="953.8,700.7 974.1,703.0 956.7,670.2 941.6,670.2" fill="#0000ac" /><polygon points="941.5,670.2 957.3,670.2 947.4,641.1 928.3,643.1" fill="#0000af" /><polygon points="930.5,642.8 948.3,641.0 944.2,631.1 922.9,634.2" fill="#00005d" /><polygon points="926.3,633.7 943.5,631.2 927.6,592.5 910.0,597.9" fill="#0000da" /><polygon points="906.7,598.9 928.5,592.2 925.0,584.5 906.3,590.8" fill="#0000d3" /><polygon points="904.0,591.6 924.9,584.5 920.5,580.9 902.3,587.4" fill="#0000c6" /><polygon points="903.0,587.2 923.0,580.0 917.4,563.1 898.2,571.6" fill="#0000cc" /><polygon points="899.1,571.1 916.3,563.6 910.2,551.2 894.0,559.4" fill="#0000bd" /><polygon points="892.0,560.4 910.9,550.9 906.4,546.6 891.4,554.5" fill="#0000ba" /><polygon points="971.3,702.7 993.7,705.1 981.2,675.9 958.8,675.5" fill="#0000d0" /><polygon points="964.6,675.6 978.2,675.8 964.4,645.4 947.9,646.8" fill="#00007b" /><polygon points="952.2,646.5 963.6,645.5 955.6,616.7 938.4,619.9" fill="#0000db" /><polygon points="940.6,619.5 953.8,617.0 951.1,617.3 935.5,620.2" fill="#0000d1" /><polygon points="937.2,619.9 951.7,617.1 949.6,609.2 934.2,612.6" fill="#0028e8" /><polygon points="937.1,612.0 948.4,609.5 942.9,584.9 927.0,589.9" fill="#0000e5" /><polygon points="925.2,590.5 940.1,585.8 942.3,582.4 925.5,587.9" fill="#0000cb" /><polygon points="923.8,588.5 937.3,584.1 926.3,557.0 915.9,561.7" fill="#0000c7" /><polygon points="913.0,563.0 927.1,556.7 921.0,538.8 905.8,546.9" fill="#0000cb" /><polygon points="992.3,704.9 1015.5,707.5 1006.1,690.2 981.2,688.7" fill="#0000e6" /><polygon points="983.8,688.8 1006.5,690.2 974.8,615.5 956.1,618.9" fill="#0000c6" /><polygon points="953.6,619.4 976.3,615.3 968.6,599.2 946.6,604.5" fill="#0000c1" /><polygon points="950.6,603.5 969.1,599.1 962.2,586.6 945.5,591.4" fill="#0000e9" /><polygon points="941.4,592.6 962.1,586.6 955.9,573.3 937.2,579.7" fill="#0000be" /><polygon points="936.8,579.9 958.4,572.5 959.3,570.0 938.6,577.2" fill="#0000cd" /><polygon points="937.4,577.6 956.6,570.9 945.5,545.2 925.0,554.6" fill="#0000c7" /><polygon points="925.3,554.5 946.4,544.8 945.4,540.8 927.6,549.3" fill="#0000c4" /><polygon points="924.5,550.7 944.3,541.3 939.4,529.0 923.2,537.6" fill="#0000e2" /><polygon points="1012.5,707.1 1029.7,709.0 1027.7,702.0 1014.5,700.8" fill="#0000d7" /><polygon points="1013.4,700.7 1026.3,701.8 1017.0,678.5 999.6,678.1" fill="#0000db" /><polygon points="1004.9,678.2 1017.6,678.5 1003.8,650.5 988.9,651.4" fill="#000099" /><polygon points="988.5,651.4 1005.1,650.4 994.1,623.5 979.6,625.6" fill="#000076" /><polygon points="980.0,625.5 996.2,623.2 988.3,608.9 976.5,611.2" fill="#0000d0" /><polygon points="973.0,611.8 990.1,608.5 980.5,589.3 965.6,593.3" fill="#0000bb" /><polygon points="967.5,592.8 979.0,589.8 969.8,570.3 959.5,573.8" fill="#0000e6" /><polygon points="956.2,574.9 970.3,570.2 963.3,552.3 952.5,556.7" fill="#0000c3" /><polygon points="952.7,556.6 963.7,552.2 960.3,548.4 952.1,551.9" fill="#0000c8" /><polygon points="948.4,553.5 960.4,548.4 960.7,541.3 946.3,547.7" fill="#0000e7" /><polygon points="945.8,548.0 957.9,542.5 957.0,537.6 946.4,542.6" fill="#0000e7" /><polygon points="945.0,543.2 956.0,538.1 957.1,529.8 941.2,537.7" fill="#0000bc" /><polygon points="942.5,537.1 956.7,530.0 953.2,521.7 940.8,528.3" fill="#0000e9" /><polygon points="1027.2,708.8 1050.6,711.3 1042.4,702.7 1025.4,701.2" fill="#0000d7" /><polygon points="1025.9,701.2 1041.4,702.6 1041.3,696.2 1022.8,694.9" fill="#0000dc" /><polygon points="1022.8,694.9 1043.9,696.4 1025.9,666.0 1011.0,666.2" fill="#0000da" /><polygon points="1008.8,666.2 1026.0,666.0 1016.6,643.3 1004.8,644.2" fill="#0000aa" /><polygon points="1001.1,644.5 1021.8,642.9 1015.5,632.7 996.9,634.7" fill="#0000c6" /><polygon points="995.4,634.9 1016.3,632.6 1015.6,628.6 997.5,630.8" fill="#0000e5" /><polygon points="995.2,631.1 1013.0,628.9 1014.0,624.2 997.6,626.4" fill="#0000cb" /><polygon points="994.6,626.8 1011.3,624.6 1013.4,623.3 992.8,626.2" fill="#0000df" /><polygon points="996.5,625.7 1012.5,623.4 990.0,572.1 973.2,577.3" fill="#0000c9" /><polygon points="975.6,576.6 987.2,573.0 982.2,559.4 970.0,563.7" fill="#0000c5" /><polygon points="966.3,565.1 984.0,558.7 970.5,529.7 959.3,535.0" fill="#0000e4" /><polygon points="955.7,536.7 969.3,530.3 968.1,527.3 955.7,533.3" fill="#0000dc" /><polygon points="954.4,534.0 969.7,526.6 966.0,514.9 952.2,522.3" fill="#0000dd" /><polygon points="1050.8,711.3 1069.3,713.4 1049.2,669.3 1032.0,669.3" fill="#0000cb" /><polygon points="1027.8,669.4 1050.6,669.3 1048.4,659.0 1028.1,659.6" fill="#0000db" /><polygon points="1024.9,659.7 1044.2,659.1 1040.4,649.0 1024.8,649.9" fill="#0000cc" /><polygon points="1021.3,650.1 1044.4,648.8 1041.7,648.5 1020.5,649.7" fill="#0000d6" /><polygon points="1019.6,649.8 1042.6,648.4 1038.6,638.5 1016.3,640.4" fill="#0000c3" /><polygon points="1016.2,640.4 1036.5,638.7 1035.6,631.7 1016.1,633.7" fill="#0000bc" /><polygon points="1014.3,633.9 1036.0,631.6 1029.2,622.4 1010.4,624.9" fill="#0000bd" /><polygon points="1011.7,624.7 1028.5,622.5 1026.8,617.8 1009.0,620.4" fill="#0000cf" /><polygon points="1007.3,620.7 1027.1,617.7 1016.2,584.1 996.0,589.2" fill="#0000c4" /><polygon points="998.9,588.5 1014.1,584.7 1014.6,582.2 994.9,587.3" fill="#0000cc" /><polygon points="998.3,586.4 1013.5,582.5 1000.7,554.3 985.5,559.7" fill="#0018d5" /><polygon points="983.9,560.3 1004.0,553.2 994.5,536.7 979.4,543.0" fill="#0000d0" /><polygon points="975.0,544.8 995.3,536.4 992.8,529.1 976.7,536.2" fill="#0000be" /><polygon points="974.0,537.4 992.1,529.4 980.6,507.2 964.4,515.8" fill="#0000d3" /><polygon points="1071.3,713.6 1083.0,714.9 1077.8,693.6 1058.9,692.5" fill="#0000b8" /><polygon points="1062.6,692.7 1074.1,693.3 1066.8,675.6 1052.7,675.4" fill="#0000c0" /><polygon points="1051.1,675.4 1067.0,675.6 1062.9,659.0 1049.0,659.4" fill="#0000ac" /><polygon points="1048.2,659.4 1058.8,659.1 1045.9,616.8 1027.5,619.4" fill="#0000c9" /><polygon points="1030.4,619.0 1042.8,617.2 1035.3,597.7 1022.3,600.3" fill="#0000c5" /><polygon points="1021.5,600.4 1035.4,597.6 1021.9,571.5 1011.7,574.4" fill="#0000cb" /><polygon points="1012.4,574.2 1026.0,570.3 1010.3,537.4 995.9,543.1" fill="#0000cd" /><polygon points="995.6,543.2 1010.1,537.5 1001.3,521.4 990.4,526.3" fill="#0038e4" /><polygon points="988.8,527.0 1005.5,519.5 1000.9,517.2 990.3,522.2" fill="#0000bd" /><polygon points="991.2,521.8 1002.6,516.4 1002.1,513.3 985.7,521.1" fill="#0000bd" /><polygon points="989.1,519.6 998.7,514.9 997.2,511.0 988.4,515.3" fill="#0000c7" /><polygon points="988.0,515.6 1000.0,509.7 999.5,508.2 984.6,515.6" fill="#0000e1" /><polygon points="984.7,515.5 997.6,509.2 995.2,499.4 984.3,505.2" fill="#0000cf" /><polygon points="1086.8,715.3 1107.1,717.5 1086.9,657.9 1064.2,658.6" fill="#0000b7" /><polygon points="1062.5,658.6 1087.1,657.9 1079.4,648.7 1057.9,649.9" fill="#0000cf" /><polygon points="1057.0,649.9 1080.1,648.7 1077.4,642.3 1053.1,644.0" fill="#0000b7" /><polygon points="1053.6,643.9 1078.8,642.2 1079.4,638.8 1052.7,640.8" fill="#0000c0" /><polygon points="1056.6,640.5 1078.9,638.8 1074.4,627.2 1051.6,629.6" fill="#0000ca" /><polygon points="1047.7,630.0 1070.7,627.6 1068.4,617.3 1044.9,620.4" fill="#0000bb" /><polygon points="1045.3,620.4 1068.4,617.3 1064.7,616.7 1042.4,619.7" fill="#0000c5" /><polygon points="1045.1,619.4 1067.5,616.3 1064.3,610.5 1041.5,614.0" fill="#0000b1" /><polygon points="1044.4,613.5 1062.9,610.7 1045.4,571.2 1028.4,575.7" fill="#0000cf" /><polygon points="1024.4,576.8 1046.1,571.0 1046.9,565.4 1023.6,572.0" fill="#0000d6" /><polygon points="1022.5,572.3 1047.7,565.2 1046.4,560.9 1023.7,567.6" fill="#0000cc" /><polygon points="1023.3,567.7 1044.2,561.6 1030.0,532.4 1008.8,540.6" fill="#0000b5" /><polygon points="1009.8,540.2 1030.0,532.4 1016.0,488.4 992.7,500.8" fill="#0000d3" /><polygon points="1109.5,717.8 1129.2,719.9 1112.9,692.8 1100.1,692.2" fill="#0000a3" /><polygon points="1097.7,692.1 1116.3,693.0 1080.4,615.0 1069.7,616.4" fill="#0000cd" /><polygon points="1066.1,616.9 1080.0,615.0 1079.4,605.3 1064.7,607.7" fill="#0000c6" /><polygon points="1066.4,607.4 1077.5,605.6 1075.1,590.9 1060.2,593.8" fill="#0000aa" /><polygon points="1056.2,594.6 1075.0,590.9 1071.8,584.2 1053.6,588.1" fill="#0000af" /><polygon points="1053.6,588.1 1069.3,584.7 1069.6,582.3 1053.8,585.8" fill="#0000d1" /><polygon points="1057.1,585.1 1070.9,582.0 1067.4,578.0 1052.5,581.5" fill="#0000c2" /><polygon points="1050.1,582.1 1069.7,577.5 1059.1,562.6 1048.3,565.7" fill="#0000d0" /><polygon points="1046.7,566.1 1060.9,562.1 1057.7,560.1 1042.7,564.4" fill="#0000b0" /><polygon points="1043.4,564.2 1062.0,558.9 1059.0,555.8 1041.3,561.1" fill="#0000b2" /><polygon points="1041.3,561.1 1055.7,556.8 1055.1,555.9 1045.3,558.8" fill="#0000d1" /><polygon points="1045.8,558.7 1057.7,555.1 1051.9,539.4 1039.1,543.8" fill="#0000d0" /><polygon points="1036.5,544.7 1049.7,540.1 1028.4,489.9 1014.4,497.0" fill="#0000de" /><polygon points="1017.9,495.2 1027.8,490.2 1028.3,481.9 1014.6,489.1" fill="#0000ca" /><polygon points="1128.5,719.8 1146.7,721.8 1139.8,698.5 1114.7,697.0" fill="#0000aa" /><polygon points="1117.6,697.2 1141.0,698.6 1117.2,640.4 1094.4,641.9" fill="#0000a6" /><polygon points="1094.1,641.9 1114.1,640.6 1113.9,633.6 1088.7,635.7" fill="#0000ad" /><polygon points="1092.4,635.4 1114.4,633.6 1114.4,631.7 1091.1,633.8" fill="#0000ca" /><polygon points="1091.0,633.8 1109.8,632.2 1109.1,621.2 1088.9,623.5" fill="#0000a9" /><polygon points="1088.9,623.5 1108.8,621.2 1105.7,617.8 1087.7,620.0" fill="#0000b9" /><polygon points="1083.9,620.5 1103.5,618.1 1095.5,587.3 1075.1,591.3" fill="#0000c4" /><polygon points="1073.7,591.6 1092.5,587.9 1080.1,559.5 1061.1,564.7" fill="#0000be" /><polygon points="1064.1,563.9 1081.9,559.0 1070.6,527.8 1047.3,536.1" fill="#0000b9" /><polygon points="1049.8,535.2 1065.9,529.5 1067.5,525.5 1048.2,532.6" fill="#0000d3" /><polygon points="1048.4,532.6 1066.2,526.0 1066.1,523.8 1048.3,530.5" fill="#0000b6" /><polygon points="1046.5,531.2 1067.0,523.5 1055.5,495.4 1036.2,504.2" fill="#0000b8" /><polygon points="1037.8,503.5 1055.1,495.5 1054.1,491.5 1037.0,499.5" fill="#0000cf" /><polygon points="1033.9,501.0 1051.6,492.7 1047.2,471.8 1025.9,483.2" fill="#0000dc" /><polygon points="1149.2,722.1 1164.3,723.7 1163.3,710.5 1142.8,708.8" fill="#00008f" /><polygon points="1145.5,709.1 1157.2,710.0 1146.7,681.6 1134.6,681.3" fill="#0000b2" /><polygon points="1133.3,681.3 1150.4,681.7 1144.6,670.5 1128.8,670.5" fill="#0000bd" /><polygon points="1128.4,670.5 1142.0,670.5 1141.4,669.8 1125.4,669.8" fill="#0000a8" /><polygon points="1128.8,669.8 1145.6,669.8 1136.5,657.4 1122.0,657.8" fill="#0000b7" /><polygon points="1124.7,657.7 1137.9,657.4 1126.3,636.3 1116.0,637.1" fill="#0000af" /><polygon points="1116.1,637.1 1131.4,636.0 1127.4,634.3 1110.4,635.7" fill="#0000bf" /><polygon points="1110.9,635.6 1126.9,634.4 1124.9,630.0 1112.7,631.1" fill="#0000c6" /><polygon points="1110.6,631.3 1128.5,629.7 1125.7,628.7 1109.2,630.2" fill="#0000af" /><polygon points="1112.6,629.9 1125.2,628.7 1108.0,588.0 1095.7,590.3" fill="#0000b1" /><polygon points="1092.6,590.9 1108.9,587.8 1074.6,500.1 1060.3,506.2" fill="#0000b6" /><polygon points="1057.9,507.2 1071.8,501.3 1067.6,495.8 1054.4,501.6" fill="#0000ca" /><polygon points="1057.5,500.3 1070.2,494.6 1065.6,490.5 1053.5,496.1" fill="#0000b1" /><polygon points="1056.8,494.5 1070.1,488.5 1060.0,465.0 1044.8,473.1" fill="#0000b1" /><polygon points="1165.8,723.9 1183.2,725.8 1156.9,671.1 1145.1,671.1" fill="#0000ad" /><polygon points="1144.9,671.1 1158.4,671.1 1154.7,657.6 1140.1,657.9" fill="#0000a1" /><polygon points="1137.2,658.0 1152.8,657.6 1128.5,598.0 1111.7,600.7" fill="#0000bf" /><polygon points="1113.0,600.5 1127.2,598.2 1102.3,543.1 1091.8,546.2" fill="#0000ab" /><polygon points="1091.6,546.3 1103.7,542.7 1104.2,540.6 1091.6,544.4" fill="#00009e" /><polygon points="1089.6,545.0 1104.3,540.6 1102.6,536.9 1091.1,540.5" fill="#00009d" /><polygon points="1090.7,540.6 1100.6,537.5 1096.5,524.9 1084.4,529.0" fill="#0000b3" /><polygon points="1086.7,528.2 1094.9,525.4 1095.5,515.3 1080.9,520.6" fill="#0000b5" /><polygon points="1080.6,520.7 1091.9,516.6 1089.4,512.5 1080.6,515.8" fill="#0000b8" /><polygon points="1076.9,517.2 1091.1,511.9 1091.8,507.7 1077.4,513.3" fill="#0000b3" /><polygon points="1079.6,512.5 1091.2,508.0 1087.1,504.7 1074.1,509.9" fill="#0000b5" /><polygon points="1074.1,509.9 1087.5,504.6 1088.0,500.4 1074.4,505.9" fill="#0000a7" /><polygon points="1074.1,506.1 1089.5,499.7 1073.6,466.4 1059.1,473.9" fill="#0000ac" /><polygon points="1058.3,474.3 1070.5,468.0 1071.0,459.3 1060.2,464.9" fill="#0000c4" /><polygon points="1180.1,725.5 1200.2,727.7 1189.6,700.2 1169.3,699.1" fill="#0000b5" /><polygon points="1169.3,699.1 1187.8,700.1 1184.0,687.1 1162.6,686.4" fill="#000091" /><polygon points="1162.7,686.4 1186.9,687.2 1177.4,677.0 1163.9,676.9" fill="#00009d" /><polygon points="1160.3,676.8 1180.3,677.1 1177.0,671.7 1156.4,671.6" fill="#00008c" /><polygon points="1158.6,671.7 1179.2,671.7 1166.4,651.3 1150.4,651.9" fill="#0000a6" /><polygon points="1148.4,652.0 1170.0,651.1 1165.4,640.0 1148.1,641.1" fill="#000092" /><polygon points="1146.7,641.1 1165.1,640.0 1158.5,630.9 1143.1,632.2" fill="#0000b8" /><polygon points="1139.9,632.4 1162.9,630.6 1150.9,615.1 1137.9,616.6" fill="#000097" /><polygon points="1136.9,616.7 1155.8,614.6 1151.8,614.8 1133.0,617.0" fill="#000092" /><polygon points="1136.1,616.6 1156.0,614.3 1145.2,594.7 1127.7,597.5" fill="#0000ba" /><polygon points="1127.2,597.6 1146.4,594.5 1129.8,559.2 1110.8,563.8" fill="#0000b6" /><polygon points="1115.9,562.5 1131.2,558.8 1117.7,534.1 1104.3,538.2" fill="#0000a9" /><polygon points="1102.7,538.7 1121.7,532.9 1108.6,505.6 1091.3,512.1" fill="#000092" /><polygon points="1094.2,511.0 1109.8,505.1 1094.2,477.2 1077.9,484.6" fill="#0000ac" /><polygon points="1080.2,483.6 1095.4,476.6 1086.4,451.1 1071.9,458.8" fill="#0000aa" /><polygon points="1200.0,727.6 1225.9,730.5 1215.4,708.5 1192.2,706.9" fill="#000087" /><polygon points="1190.0,706.7 1216.8,708.6 1209.0,701.4 1191.5,700.4" fill="#000099" /><polygon points="1189.3,700.2 1209.7,701.4 1211.5,699.0 1187.5,697.7" fill="#00008f" /><polygon points="1189.5,697.8 1211.8,699.0 1180.1,626.4 1161.5,628.0" fill="#0000a9" /><polygon points="1157.3,628.4 1181.5,626.3 1177.7,620.8 1159.8,622.5" fill="#000096" /><polygon points="1156.3,622.9 1178.7,620.7 1166.5,599.2 1148.0,601.9" fill="#0000ad" /><polygon points="1146.9,602.0 1166.1,599.3 1157.8,568.7 1137.7,572.9" fill="#0000b4" /><polygon points="1134.2,573.6 1157.6,568.7 1151.6,552.9 1128.0,558.7" fill="#0000c0" /><polygon points="1130.2,558.1 1150.4,553.2 1144.3,542.6 1125.7,547.6" fill="#0000a3" /><polygon points="1124.9,547.9 1145.9,542.2 1144.6,540.0 1127.2,544.8" fill="#000099" /><polygon points="1124.1,545.7 1144.5,540.0 1144.7,537.4 1124.1,543.2" fill="#00008a" /><polygon points="1123.9,543.2 1142.6,538.0 1136.3,525.5 1116.2,531.7" fill="#00009e" /><polygon points="1117.2,531.4 1138.8,524.7 1134.3,521.3 1116.9,527.0" fill="#000096" /><polygon points="1114.7,527.7 1136.9,520.5 1126.8,503.9 1110.2,510.0" fill="#00009f" /><polygon points="1111.6,509.5 1126.6,504.0 1122.7,485.0 1102.6,493.3" fill="#0000b8" /><polygon points="1102.5,493.4 1118.4,486.8 1115.0,475.3 1095.9,483.8" fill="#00009f" /><polygon points="1096.2,483.6 1114.4,475.6 1117.2,472.6 1098.0,481.1" fill="#0000ae" /><polygon points="1099.8,480.3 1114.2,473.9 1111.1,469.1 1095.3,476.4" fill="#0000ae" /><polygon points="1093.7,477.1 1114.8,467.4 1108.2,458.9 1094.1,465.8" fill="#0000a5" /><polygon points="1089.3,468.1 1108.4,458.8 1103.3,442.1 1085.1,451.7" fill="#0000bd" /><polygon points="1220.3,729.9 1247.2,732.8 1226.1,690.1 1208.5,689.4" fill="#000087" /><polygon points="1207.4,689.4 1230.5,690.2 1228.8,690.1 1203.5,689.2" fill="#00008c" /><polygon points="1204.1,689.2 1230.4,690.2 1218.0,662.8 1194.6,663.1" fill="#00009e" /><polygon points="1194.2,663.1 1216.8,662.8 1215.3,659.4 1192.8,659.8" fill="#000095" /><polygon points="1196.0,659.8 1218.3,659.3 1209.0,643.2 1189.5,644.2" fill="#0000a7" /><polygon points="1189.0,644.2 1206.7,643.4 1209.7,642.6 1186.1,643.8" fill="#0000a6" /><polygon points="1189.5,643.6 1211.5,642.5 1197.5,616.9 1173.7,619.3" fill="#000087" /><polygon points="1175.4,619.1 1196.6,617.0 1189.4,601.5 1169.4,604.2" fill="#000096" /><polygon points="1168.3,604.3 1191.3,601.3 1177.4,562.0 1154.2,567.0" fill="#000090" /><polygon points="1153.1,567.2 1172.7,563.0 1153.5,509.4 1132.2,516.6" fill="#0000ab" /><polygon points="1131.2,516.9 1152.9,509.7 1151.5,506.0 1130.0,513.4" fill="#0000a1" /><polygon points="1133.3,512.2 1153.8,505.2 1138.6,474.3 1120.8,481.8" fill="#00008f" /><polygon points="1121.5,481.5 1138.0,474.6 1130.1,458.3 1111.1,467.2" fill="#000098" /><polygon points="1112.0,466.8 1129.6,458.6 1132.9,456.7 1114.7,465.2" fill="#000094" /><polygon points="1112.0,466.4 1131.3,457.5 1129.4,453.1 1110.2,462.2" fill="#0000b4" /><polygon points="1109.5,462.6 1128.7,453.5 1127.0,454.1 1110.0,462.2" fill="#00009c" /><polygon points="1112.2,461.2 1129.4,453.0 1119.5,433.5 1100.7,443.4" fill="#0000ac" /><polygon points="1249.6,733.1 1268.2,735.1 1263.7,719.7 1242.2,717.9" fill="#000078" /><polygon points="1239.0,717.6 1264.7,719.8 1248.2,674.5 1219.5,674.3" fill="#000097" /><polygon points="1224.4,674.3 1244.4,674.5 1242.3,661.4 1219.8,661.7" fill="#00007c" /><polygon points="1215.5,661.8 1241.7,661.4 1239.8,655.7 1216.4,656.3" fill="#0000a3" /><polygon points="1217.1,656.3 1236.1,655.8 1222.7,626.5 1204.2,628.0" fill="#000091" /><polygon points="1204.6,628.0 1222.9,626.5 1220.0,618.1 1197.1,620.3" fill="#00009c" /><polygon points="1198.4,620.2 1221.8,617.9 1218.9,605.2 1191.7,608.4" fill="#0000ac" /><polygon points="1193.1,608.3 1218.2,605.3 1195.6,554.3 1173.7,559.2" fill="#00008f" /><polygon points="1173.1,559.3 1192.6,555.0 1193.0,554.6 1172.5,559.1" fill="#000093" /><polygon points="1175.2,558.5 1192.6,554.7 1179.9,524.3 1163.6,529.0" fill="#000098" /><polygon points="1160.0,530.0 1182.8,523.5 1180.5,520.9 1159.8,527.0" fill="#0000ad" /><polygon points="1161.1,526.6 1181.7,520.5 1177.7,512.4 1157.5,518.7" fill="#000082" /><polygon points="1154.6,519.6 1176.5,512.8 1174.2,506.8 1156.4,512.6" fill="#0000a4" /><polygon points="1154.9,513.0 1177.3,505.8 1166.2,488.9 1146.8,496.0" fill="#00009d" /><polygon points="1145.5,496.5 1168.1,488.2 1157.9,468.7 1141.1,475.7" fill="#0000a5" /><polygon points="1137.2,477.3 1157.1,469.1 1150.1,450.4 1130.3,459.6" fill="#0000a7" /><polygon points="1131.4,459.0 1150.5,450.3 1142.0,421.6 1120.6,432.9" fill="#00008b" /><polygon points="1270.4,735.3 1295.8,738.1 1290.7,720.6 1266.3,718.6" fill="#000087" /><polygon points="1265.2,718.5 1289.8,720.6 1283.4,711.9 1260.0,710.3" fill="#00008e" /><polygon points="1259.6,710.3 1285.0,712.0 1283.3,710.6 1262.2,709.2" fill="#00007c" /><polygon points="1261.7,709.2 1281.3,710.5 1279.8,702.7 1254.7,701.4" fill="#000088" /><polygon points="1255.9,701.4 1283.5,702.9 1275.0,693.7 1255.7,693.0" fill="#00007f" /><polygon points="1251.6,692.8 1279.4,693.9 1272.9,687.9 1247.9,687.1" fill="#000071" /><polygon points="1251.2,687.2 1273.7,687.9 1273.7,683.4 1248.9,682.8" fill="#000098" /><polygon points="1250.3,682.9 1272.8,683.4 1274.3,680.3 1248.6,679.8" fill="#00009d" /><polygon points="1248.5,679.8 1269.2,680.2 1262.8,664.0 1241.6,664.2" fill="#00007f" /><polygon points="1238.5,664.3 1266.7,664.0 1256.9,639.6 1234.1,640.8" fill="#000081" /><polygon points="1231.9,640.9 1255.6,639.7 1238.4,602.9 1214.0,605.8" fill="#00008b" /><polygon points="1214.1,605.8 1238.3,602.9 1210.4,527.9 1184.5,534.8" fill="#0000a7" /><polygon points="1187.0,534.1 1205.6,529.2 1205.9,519.3 1183.8,525.5" fill="#000086" /><polygon points="1182.0,526.0 1204.1,519.8 1204.2,518.9 1183.3,524.9" fill="#00007a" /><polygon points="1185.1,524.4 1203.1,519.3 1202.1,518.0 1182.2,523.7" fill="#0000a0" /><polygon points="1181.3,524.0 1201.7,518.1 1184.4,468.4 1161.5,477.4" fill="#0000ab" /><polygon points="1161.0,477.6 1181.8,469.4 1178.6,452.6 1158.1,461.5" fill="#0000ae" /><polygon points="1154.9,462.9 1178.3,452.8 1171.4,445.0 1152.7,453.5" fill="#000091" /><polygon points="1152.2,453.7 1174.1,443.8 1171.8,439.9 1150.4,449.8" fill="#000098" /><polygon points="1151.7,449.2 1170.4,440.5 1167.9,440.8 1148.3,449.9" fill="#00008e" /><polygon points="1150.5,448.9 1171.1,439.3 1171.4,435.9 1147.7,447.1" fill="#00008b" /><polygon points="1148.9,446.5 1170.5,436.3 1168.4,429.2 1147.1,439.6" fill="#0000a4" /><polygon points="1144.6,440.8 1165.7,430.5 1158.3,412.9 1137.5,424.0" fill="#000094" /><polygon points="1298.3,738.4 1316.6,740.4 1308.9,726.3 1287.0,724.4" fill="#000066" /><polygon points="1291.7,724.8 1311.8,726.5 1312.4,723.5 1291.2,721.8" fill="#00007e" /><polygon points="1286.9,721.4 1310.7,723.4 1299.7,703.9 1281.0,702.9" fill="#000080" /><polygon points="1278.3,702.7 1304.7,704.1 1294.4,686.2 1273.5,685.7" fill="#00007e" /><polygon points="1274.6,685.7 1295.6,686.3 1279.3,649.0 1256.5,649.8" fill="#000077" /><polygon points="1255.8,649.8 1279.6,649.0 1261.1,601.7 1242.0,603.9" fill="#000074" /><polygon points="1240.2,604.1 1256.3,602.3 1247.9,579.4 1229.6,582.3" fill="#00009a" /><polygon points="1227.7,582.6 1248.0,579.4 1235.1,548.8 1215.9,553.0" fill="#000095" /><polygon points="1215.1,553.2 1238.6,548.1 1234.4,543.9 1215.4,548.1" fill="#00007d" /><polygon points="1218.5,547.4 1232.3,544.3 1231.9,534.7 1213.2,539.3" fill="#00008d" /><polygon points="1211.7,539.6 1232.1,534.7 1226.8,532.0 1212.8,535.5" fill="#000076" /><polygon points="1210.1,536.1 1226.7,532.0 1230.9,529.3 1209.6,534.7" fill="#000083" /><polygon points="1212.2,534.0 1227.9,530.1 1221.9,511.4 1205.3,516.2" fill="#000087" /><polygon points="1203.1,516.8 1220.5,511.8 1220.9,511.6 1201.9,517.1" fill="#000089" /><polygon points="1200.2,517.6 1222.7,511.1 1212.4,494.5 1193.7,500.6" fill="#00007f" /><polygon points="1197.2,499.4 1214.0,493.9 1211.3,488.7 1195.0,494.2" fill="#000082" /><polygon points="1192.0,495.2 1211.0,488.8 1210.7,485.0 1192.5,491.2" fill="#000085" /><polygon points="1190.5,491.9 1211.9,484.5 1200.1,459.1 1183.9,465.6" fill="#0000a9" /><polygon points="1181.3,466.6 1201.7,458.4 1190.8,438.9 1172.8,446.9" fill="#000094" /><polygon points="1174.6,446.1 1191.5,438.5 1184.0,428.9 1170.6,435.2" fill="#0000a1" /><polygon points="1166.5,437.2 1187.1,427.5 1180.4,419.7 1162.7,428.4" fill="#0000a1" /><polygon points="1166.5,426.5 1180.8,419.5 1174.3,404.5 1160.9,411.5" fill="#000083" /><polygon points="1314.3,740.1 1341.6,743.1 1319.6,694.1 1300.5,693.4" fill="#000074" /><polygon points="1295.0,693.2 1318.6,694.1 1304.1,660.0 1284.2,660.3" fill="#000070" /><polygon points="1283.0,660.4 1306.2,660.0 1302.5,653.8 1282.6,654.3" fill="#00006f" /><polygon points="1281.4,654.4 1303.7,653.8 1290.8,618.6 1267.3,620.6" fill="#000074" /><polygon points="1267.0,620.6 1290.7,618.6 1279.2,595.0 1257.7,597.7" fill="#00009a" /><polygon points="1258.8,597.6 1279.2,595.0 1279.0,591.2 1257.9,593.9" fill="#00008a" /><polygon points="1258.5,593.8 1277.7,591.3 1269.5,580.8 1250.3,583.7" fill="#000095" /><polygon points="1253.7,583.2 1271.6,580.5 1264.3,558.3 1245.2,561.9" fill="#00008f" /><polygon points="1242.6,562.4 1262.1,558.7 1243.6,506.1 1221.2,512.6" fill="#00007c" /><polygon points="1222.5,512.2 1243.0,506.3 1241.8,506.5 1221.5,512.3" fill="#00008f" /><polygon points="1222.4,512.1 1243.0,506.1 1234.7,487.5 1213.8,494.3" fill="#000079" /><polygon points="1215.6,493.7 1233.6,487.8 1228.1,480.3 1208.8,487.0" fill="#000097" /><polygon points="1209.3,486.8 1232.2,478.9 1218.4,457.2 1200.3,464.3" fill="#000078" /><polygon points="1199.3,464.7 1221.0,456.2 1217.9,451.7 1199.0,459.3" fill="#000097" /><polygon points="1200.1,458.8 1216.1,452.4 1215.5,443.7 1197.0,451.4" fill="#00007c" /><polygon points="1196.5,451.7 1213.5,444.6 1213.3,438.6 1192.0,447.7" fill="#00008b" /><polygon points="1194.8,446.5 1210.9,439.6 1211.2,428.5 1191.9,437.2" fill="#00008a" /><polygon points="1191.1,437.5 1206.3,430.7 1204.2,418.9 1183.6,428.7" fill="#0000a3" /><polygon points="1183.9,428.5 1203.3,419.4 1196.1,392.9 1174.1,404.5" fill="#000090" /><polygon points="1337.7,742.7 1359.6,745.1 1341.4,712.0 1326.3,711.0" fill="#000061" /><polygon points="1329.8,711.2 1344.5,712.2 1338.9,693.7 1320.5,693.0" fill="#000061" /><polygon points="1318.2,692.9 1337.2,693.6 1307.6,626.4 1292.7,627.4" fill="#000073" /><polygon points="1289.7,627.6 1310.7,626.2 1306.9,618.2 1287.2,619.9" fill="#000069" /><polygon points="1290.4,619.6 1307.4,618.2 1302.3,605.1 1282.7,607.1" fill="#000069" /><polygon points="1282.8,607.1 1300.8,605.2 1300.8,601.5 1282.4,603.5" fill="#000086" /><polygon points="1280.2,603.7 1295.9,602.0 1294.6,591.9 1277.2,594.0" fill="#000098" /><polygon points="1277.7,594.0 1292.2,592.2 1277.3,554.4 1259.7,557.7" fill="#000089" /><polygon points="1262.4,557.2 1276.0,554.6 1273.2,549.0 1257.6,552.2" fill="#000087" /><polygon points="1257.6,552.2 1272.9,549.1 1277.7,547.1 1257.8,551.1" fill="#000087" /><polygon points="1256.9,551.3 1276.9,547.3 1259.1,506.8 1243.4,511.2" fill="#00007e" /><polygon points="1243.2,511.3 1257.8,507.2 1254.2,497.1 1239.7,501.5" fill="#000071" /><polygon points="1239.6,501.5 1251.8,497.8 1254.6,494.2 1239.2,498.9" fill="#00007a" /><polygon points="1238.3,499.1 1252.6,494.8 1246.3,480.8 1233.0,485.2" fill="#000072" /><polygon points="1232.4,485.4 1247.7,480.3 1244.9,470.5 1226.9,476.8" fill="#000090" /><polygon points="1226.5,476.9 1243.5,471.0 1242.3,468.5 1229.6,473.0" fill="#00007f" /><polygon points="1227.0,474.0 1240.8,469.1 1239.6,466.7 1228.8,470.6" fill="#000078" /><polygon points="1224.9,472.0 1242.8,465.6 1237.3,455.1 1220.3,461.6" fill="#00008f" /><polygon points="1220.5,461.5 1236.3,455.5 1216.3,406.7 1203.0,413.1" fill="#000096" /><polygon points="1202.4,413.5 1217.8,406.0 1214.3,400.1 1201.0,406.8" fill="#00007c" /><polygon points="1199.5,407.5 1215.1,399.7 1209.8,385.6 1194.4,393.7" fill="#0000a4" /></g>
<g filter="url(#b12)">
<polygon points="865.6,643.1 884.6,641.4 886.3,663.9 863.9,665.6" fill="#004466" />
<polygon points="863.9,665.6 889.7,663.9 896.7,693.2 875.9,693.2 865.6,681.1" fill="#00005a" />
<polygon points="920.8,638.0 938.1,644.9 941.5,672.5 931.2,696.7 920.8,689.7 924.3,665.6" fill="#000066" />
<polygon points="886.3,650.1 896.7,651.8 900.1,665.6 889.7,663.9" fill="#1078d8" />
<polygon points="808.6,674.2 851.8,675.9 851.8,688.0 806.9,684.6" fill="#0038dc" />
<polygon points="810.4,624.2 819.0,623.3 819.8,634.5 813.8,637.1" fill="#10a8d0" />
<polygon points="806.9,662.1 816.4,655.2 822.4,674.2 810.4,674.2" fill="#0c90c0" />
<polygon points="998.5,677.7 1005.4,678.5 1006.2,686.3 1000.2,685.4" fill="#10a0e0" />
<polygon points="915.9,594.8 928.6,589.6 938.1,596.9 945.5,613.8 941.2,623.3 924.4,624.4 918.0,607.5" fill="#0058d8" />
<polygon points="929.6,607.5 941.2,608.5 944.4,620.1 932.8,623.3" fill="#0a80dc" />
<polygon points="1100.0,637.0 1120.0,650.0 1140.0,668.0 1166.0,682.0 1186.0,700.0 1210.0,712.0 1247.0,733.0 1247.0,745.0 1090.0,725.0 1060.0,690.0" fill="#000092" />
<polygon points="1000.0,640.0 1100.0,637.0 1060.0,690.0 1090.0,725.0 1010.0,716.0" fill="#0000a6" />
<polygon points="1110.0,440.0 1160.0,412.0 1210.0,472.0 1186.0,542.0 1172.0,552.0 1150.0,540.0" fill="#0000a4" opacity=".75"/>
</g>
</g>
<polygon points="1018.0,612.0 1036.0,610.0 1056.0,620.0 1084.0,637.0 1062.0,642.0 1030.0,634.0" fill="#00006c" filter="url(#b12)"/>
<g filter="url(#b06)">
<polygon points="673.5,670.1 709.2,650.6 709.2,674.2" fill="#0d6e00" />
<polygon points="709.2,650.6 762.0,661.2 762.0,680.0 709.2,674.2" fill="#14a800" />
<polygon points="762.0,661.2 808.4,670.5 806.0,684.8 762.0,680.0" fill="#1ede0a" />
<polygon points="709.0,650.6 766.0,620.5 776.0,636.0 740.0,650.0" fill="#0a9ea6" />
<polygon points="808.0,654.0 817.0,652.0 823.0,676.0 806.0,678.0 804.0,668.0" fill="#0a8cb4" />
<polygon points="813.0,626.0 820.0,623.0 818.0,640.0 812.0,634.0" fill="#10c8d8" />
<polygon points="861.1,571.1 889.6,555.8 890.6,561.1 887.5,569.5 880.1,575.3 871.6,571.6 867.4,568.5" fill="#00d2e6" />
<polygon points="859.0,618.0 866.4,614.9 870.6,620.1 869.5,628.6 864.3,629.6 855.8,625.4" fill="#14b8e8" />
</g>
<polygon points="894.3,552.1 895.4,554.8 892.7,566.4 890.1,571.6 888.0,570.1 890.6,559.0" fill="none" stroke="#50c000" stroke-width="2" stroke-linejoin="round"/><polygon points="894.3,552.1 895.4,554.8 892.7,566.4 890.1,571.6 888.0,570.1 890.6,559.0" fill="none" stroke="#f0a000" stroke-width="1" stroke-linejoin="round"/><polygon points="894.3,552.1 895.4,554.8 892.7,566.4 890.1,571.6 888.0,570.1 890.6,559.0" fill="#f00000"/>
<polygon points="884.3,571.6 887.5,572.2 888.0,576.4 885.9,578.5 884.3,574.8" fill="none" stroke="#50c000" stroke-width="2" stroke-linejoin="round"/><polygon points="884.3,571.6 887.5,572.2 888.0,576.4 885.9,578.5 884.3,574.8" fill="none" stroke="#f0a000" stroke-width="1" stroke-linejoin="round"/><polygon points="884.3,571.6 887.5,572.2 888.0,576.4 885.9,578.5 884.3,574.8" fill="#f00000"/>
<polygon points="897.5,592.2 899.1,594.8 903.3,594.3 906.4,601.2 902.2,609.6 896.9,615.9 892.7,623.3 889.6,625.4 882.2,620.1 880.6,613.8 884.3,608.5 889.6,604.3 893.8,597.5" fill="none" stroke="#20c060" stroke-width="2.6" stroke-linejoin="round"/><polygon points="897.5,592.2 899.1,594.8 903.3,594.3 906.4,601.2 902.2,609.6 896.9,615.9 892.7,623.3 889.6,625.4 882.2,620.1 880.6,613.8 884.3,608.5 889.6,604.3 893.8,597.5" fill="none" stroke="#e0e000" stroke-width="1.3" stroke-linejoin="round"/><polygon points="897.5,592.2 899.1,594.8 903.3,594.3 906.4,601.2 902.2,609.6 896.9,615.9 892.7,623.3 889.6,625.4 882.2,620.1 880.6,613.8 884.3,608.5 889.6,604.3 893.8,597.5" fill="#f00000"/>
<polygon points="934.9,580.1 953.9,573.7 957.1,582.2 963.4,581.7 959.2,593.8 950.7,599.1 948.6,603.8 944.4,599.1 941.2,596.9 938.1,589.6" fill="none" stroke="#00b8a0" stroke-width="3.2" stroke-linejoin="round"/><polygon points="934.9,580.1 953.9,573.7 957.1,582.2 963.4,581.7 959.2,593.8 950.7,599.1 948.6,603.8 944.4,599.1 941.2,596.9 938.1,589.6" fill="none" stroke="#30d020" stroke-width="1.6" stroke-linejoin="round"/><polygon points="934.9,580.1 953.9,573.7 957.1,582.2 963.4,581.7 959.2,593.8 950.7,599.1 948.6,603.8 944.4,599.1 941.2,596.9 938.1,589.6" fill="url(#gOr)"/>
<polygon points="970.8,605.4 987.6,603.3 996.1,611.7 1000.3,622.3 1002.4,630.7 996.1,634.9 994.0,638.1 971.8,640.2 959.2,630.7 957.1,621.2 966.5,614.9" fill="none" stroke="#00b8c0" stroke-width="3.2" stroke-linejoin="round"/><polygon points="970.8,605.4 987.6,603.3 996.1,611.7 1000.3,622.3 1002.4,630.7 996.1,634.9 994.0,638.1 971.8,640.2 959.2,630.7 957.1,621.2 966.5,614.9" fill="none" stroke="#20d060" stroke-width="1.6" stroke-linejoin="round"/><polygon points="970.8,605.4 987.6,603.3 996.1,611.7 1000.3,622.3 1002.4,630.7 996.1,634.9 994.0,638.1 971.8,640.2 959.2,630.7 957.1,621.2 966.5,614.9" fill="url(#gGy)"/>
<polygon points="981.3,610.1 991.9,608.5 997.1,620.1 987.6,621.2" fill="#108878" filter="url(#b06)"/>
<polygon points="971.8,607.0 990.3,606.4 990.3,610.4 980.8,610.4 980.8,615.9 971.8,615.9" fill="#e0d000" />
<polygon points="973.4,608.3 988.7,607.9 988.7,609.6 979.7,609.6 979.7,614.7 973.4,614.7" fill="#f06800" />
<g filter="url(#b12)">
<polygon points="1025.6,586.7 1034.2,581.5 1061.8,576.3 1094.6,575.4 1132.6,575.4 1182.6,573.7 1182.6,573.7 1194.5,573.7 1194.5,577.2 1206.5,577.2 1206.5,580.7 1218.4,580.7 1218.4,584.1 1230.3,584.1 1230.3,587.6 1242.3,587.6 1242.3,591.1 1254.2,591.1 1254.2,594.6 1266.1,594.6 1266.1,598.0 1278.1,598.0 1278.1,601.5 1290.0,601.5 1290.0,605.0 1206.8,621.2 1201.6,626.3 1129.1,631.5 1086.0,635.0 1080.8,628.0 1055.8,617.7 1044.6,602.2" fill="#006a3e" />
<polygon points="1080.0,602.0 1110.0,600.0 1150.0,608.0 1190.0,606.0 1230.0,606.0 1290.0,605.0 1206.8,621.2 1201.6,626.3 1129.1,631.5 1086.0,635.0 1080.8,628.0" fill="#005c38" />
<polygon points="1025.6,586.7 1034.2,581.5 1061.8,576.3 1065.3,586.7 1077.4,600.5 1080.8,628.0 1055.8,617.7 1044.6,602.2" fill="#00b468" />
<polygon points="1030.0,586.0 1052.0,581.0 1058.0,598.0 1046.0,601.0" fill="#00da84" />
<polygon points="1060.0,578.0 1066.0,590.0 1079.0,603.0 1083.0,632.0 1092.0,634.0 1088.0,600.0 1074.0,586.0 1068.0,577.0" fill="#008c54" />
</g>
<polygon points="1035.9,575.4 1060.1,571.1 1061.8,575.4 1037.7,579.7" fill="#0a50e0" filter="url(#b06)"/>
<polygon points="1067.0,574.9 1087.7,571.1 1089.4,574.6 1068.7,578.0" fill="#0a40d0" filter="url(#b06)"/>
<polygon points="1115.3,570.8 1124.0,571.5 1129.1,575.4 1118.8,574.6" fill="#000c90" filter="url(#b06)"/>
<polygon points="1009.2,535.2 1061.8,514.2 1067.0,520.7 1073.0,517.3 1079.1,523.7 1092.6,517.6 1100.7,531.1 1106.7,529.4 1111.9,535.2 1117.4,533.5 1122.2,539.7 1127.8,538.0 1132.6,543.8 1137.8,542.1 1142.9,548.0 1148.5,546.3 1153.3,552.1 1157.6,550.1 1182.6,572.5 1178.8,574.9 1163.7,569.0 1148.1,572.8 1132.6,574.9 1122.2,571.1 1115.3,568.0 1108.4,571.1 1094.6,574.9 1087.7,568.5 1080.8,570.3 1067.0,573.2 1061.8,568.5 1049.7,571.1 1037.7,573.2 1029.0,565.9 1025.6,557.3 1017.0,550.4 1006.6,548.7" fill="none" stroke="#00b48c" stroke-width="3.6" stroke-linejoin="round"/><polygon points="1009.2,535.2 1061.8,514.2 1067.0,520.7 1073.0,517.3 1079.1,523.7 1092.6,517.6 1100.7,531.1 1106.7,529.4 1111.9,535.2 1117.4,533.5 1122.2,539.7 1127.8,538.0 1132.6,543.8 1137.8,542.1 1142.9,548.0 1148.5,546.3 1153.3,552.1 1157.6,550.1 1182.6,572.5 1178.8,574.9 1163.7,569.0 1148.1,572.8 1132.6,574.9 1122.2,571.1 1115.3,568.0 1108.4,571.1 1094.6,574.9 1087.7,568.5 1080.8,570.3 1067.0,573.2 1061.8,568.5 1049.7,571.1 1037.7,573.2 1029.0,565.9 1025.6,557.3 1017.0,550.4 1006.6,548.7" fill="none" stroke="#b4d800" stroke-width="1.9" stroke-linejoin="round"/><polygon points="1009.2,535.2 1061.8,514.2 1067.0,520.7 1073.0,517.3 1079.1,523.7 1092.6,517.6 1100.7,531.1 1106.7,529.4 1111.9,535.2 1117.4,533.5 1122.2,539.7 1127.8,538.0 1132.6,543.8 1137.8,542.1 1142.9,548.0 1148.5,546.3 1153.3,552.1 1157.6,550.1 1182.6,572.5 1178.8,574.9 1163.7,569.0 1148.1,572.8 1132.6,574.9 1122.2,571.1 1115.3,568.0 1108.4,571.1 1094.6,574.9 1087.7,568.5 1080.8,570.3 1067.0,573.2 1061.8,568.5 1049.7,571.1 1037.7,573.2 1029.0,565.9 1025.6,557.3 1017.0,550.4 1006.6,548.7" fill="url(#gDR)"/>
<polygon points="1032.5,541.8 1063.6,534.9 1091.2,547.0 1080.8,562.5 1042.8,564.2" fill="#430000" filter="url(#b3)"/>
<polygon points="1035.9,544.9 1042.0,544.9 1042.5,549.5 1036.8,549.5" fill="#c00000" filter="url(#b12)"/>
<polygon points="997.1,558.2 982.4,586.7 991.1,593.6 1006.6,591.0 1009.2,597.0 1004.9,600.5 1020.4,610.8 1035.9,608.2 1054.9,618.6 1055.8,615.1 1044.6,602.2 1025.6,586.7 1023.9,583.2 1015.2,578.0 1011.8,567.7 1003.1,565.9 999.7,558.2" fill="none" stroke="#00c080" stroke-width="3" stroke-linejoin="round"/><polygon points="997.1,558.2 982.4,586.7 991.1,593.6 1006.6,591.0 1009.2,597.0 1004.9,600.5 1020.4,610.8 1035.9,608.2 1054.9,618.6 1055.8,615.1 1044.6,602.2 1025.6,586.7 1023.9,583.2 1015.2,578.0 1011.8,567.7 1003.1,565.9 999.7,558.2" fill="none" stroke="#d0e000" stroke-width="1.5" stroke-linejoin="round"/><polygon points="997.1,558.2 982.4,586.7 991.1,593.6 1006.6,591.0 1009.2,597.0 1004.9,600.5 1020.4,610.8 1035.9,608.2 1054.9,618.6 1055.8,615.1 1044.6,602.2 1025.6,586.7 1023.9,583.2 1015.2,578.0 1011.8,567.7 1003.1,565.9 999.7,558.2" fill="#e60000"/>
<polygon points="990.0,575.0 1003.0,568.0 1010.0,580.0 996.0,588.0" fill="#ff1008" filter="url(#b12)"/>
<polygon points="1010.0,590.0 1022.0,588.0 1030.0,600.0 1015.0,598.0" fill="#b80000" filter="url(#b12)"/>
<polygon points="1001.4,556.4 1008.3,548.7 1017.0,550.4 1025.6,557.3 1029.0,565.9 1035.9,572.8 1032.5,579.7 1023.9,581.5 1015.2,578.0 1011.8,567.7 1003.1,565.9" fill="#d6d400" filter="url(#b06)"/>
<polygon points="999.7,558.2 1011.8,565.9 1015.2,578.0 1022.1,581.5 1011.8,579.7 1004.0,567.7" fill="#f06000" filter="url(#b06)"/>
<polygon points="1009.2,552.1 1012.6,550.8 1016.1,557.7 1012.6,559.4" fill="#1060e0" stroke="#30d0a0" stroke-width="1"/>
<polygon points="1020.8,559.9 1024.2,558.7 1025.9,562.5 1022.5,564.2" fill="#1090e0" stroke="#30d0a0" stroke-width=".8"/>
</g>
</svg>
<svg style="left:497px;top:201px" width="1423" height="810" viewBox="497 201 1423 810" font-family="Liberation Sans,sans-serif">
<defs><linearGradient id="cb2" x1="0" y1="0" x2="1" y2="0"><stop offset="0" stop-color="#0000ff"/><stop offset="0.25" stop-color="#00ffff"/><stop offset="0.5" stop-color="#00f200"/><stop offset="0.75" stop-color="#ffff00"/><stop offset="1" stop-color="#ff0000"/></linearGradient></defs>
<rect x="844" y="870" width="469.6" height="16.2" fill="url(#cb2)"/>
<path d="M843.9,862.2V873.8" stroke="#1c1c1c" stroke-width="1"/>
<path d="M936.6999999999999,862.2V873.8" stroke="#1c1c1c" stroke-width="1"/>
<path d="M1030.7,862.2V873.8" stroke="#1c1c1c" stroke-width="1"/>
<path d="M1124.8000000000002,862.2V873.8" stroke="#1c1c1c" stroke-width="1"/>
<path d="M1219.7,862.2V873.8" stroke="#1c1c1c" stroke-width="1"/>
<path d="M1313.8000000000002,862.2V873.8" stroke="#1c1c1c" stroke-width="1"/>
<text x="844.4" y="855" font-size="16" text-anchor="middle" fill="#222">0.0e+000</text>
<text x="937.5" y="855" font-size="16" text-anchor="middle" fill="#222">20000</text>
<text x="1031" y="855" font-size="16" text-anchor="middle" fill="#222">40000</text>
<text x="1125" y="855" font-size="16" text-anchor="middle" fill="#222">60000</text>
<text x="1219.5" y="855" font-size="16" text-anchor="middle" fill="#222">80000</text>
<text x="1314" y="855" font-size="16" text-anchor="middle" fill="#222">1.0e+005</text>
<text x="1078.4" y="835.4" font-size="17.6" text-anchor="middle" fill="#222">pMax</text>
<path d="M598.5,908.5L600.2,881" stroke="#f4f420" stroke-width="1"/>
<path d="M598.5,908.5L631,889.4" stroke="#f05050" stroke-width="1"/>
<path d="M598.5,908.5L627,939" stroke="#30e030" stroke-width="1"/>
<path d="M600.4,869.6 L604,880.6 C602,883 598,883 596.2,880.6Z" fill="#c8c000"/><path d="M600.4,869.6 L602,881.6 C600,882.6 598,882.4 596.2,880.6Z" fill="#e8e020"/>
<path d="M638.6,884.4 L633.6,892.4 C631,892 629,889 629.6,886.4Z" fill="#a01010"/><path d="M638.6,884.4 L631,891.4 C629.6,890 629,888 629.6,886.4Z" fill="#d02020"/>
<path d="M636.6,946.4 L625,941.4 C624.6,938.6 627.6,935.6 630.6,935.8Z" fill="#18c818"/><path d="M636.6,946.4 L625,941.4 C624.8,940 625.6,938.4 626.6,937.4Z" fill="#30f030"/>
<text x="603.4" y="878.6" font-size="17.5" fill="#222">Y</text>
<text x="632.8" y="890.4" font-size="17.5" fill="#222">X</text>
<text x="630.6" y="939.6" font-size="17.5" fill="#222">Z</text>
</svg>
<div class="a" style="left:8px;top:1016px;width:1912px;height:24px;background:#f0f0f0;"></div>
<div class="a" style="left:493px;top:1016px;width:1427px;height:1px;background:#d4d4d4;"></div>
<div class="a" style="left:978px;top:1021px;width:926px;height:22px;box-sizing:border-box;background:#e6e6e6;border:1px solid #bcbcbc"></div>
<div class="a" style="left:960px;top:1025px;width:16px;height:16px;background:#d2d2d2"></div>
<svg style="left:962px;top:1027px" width="12" height="12" viewBox="0 0 12 12"><path d="M2,2L10,10M10,2L2,10" stroke="#a8a8a8" stroke-width="2.6"/></svg>
<div class="a" style="left:1909px;top:1020px;width:1px;height:20px;background:#c0c0c0;"></div>
<div class="a" style="left:0px;top:1040px;width:1920px;height:3px;background:#3c3c3c;"></div>
<div class="a" style="left:0px;top:1040px;width:48px;height:3px;background:#16242e;"></div>
<div class="a" style="left:48px;top:1040px;width:344px;height:3px;background:#ebebeb;"></div>
<div class="a" style="left:48px;top:1040px;width:344px;height:1px;background:#bdbdbd;"></div>
<div class="a" style="left:392px;top:1040px;width:200px;height:3px;background:linear-gradient(90deg,#1c2c36,#3c3c3c);"></div>
<div class="a" style="left:1078px;top:1040px;width:50px;height:3px;background:#6a6a6a;"></div>
<div class="a" style="left:1915px;top:1040px;width:1px;height:3px;background:#b0b0b0;"></div>
</div>
</body></html>
